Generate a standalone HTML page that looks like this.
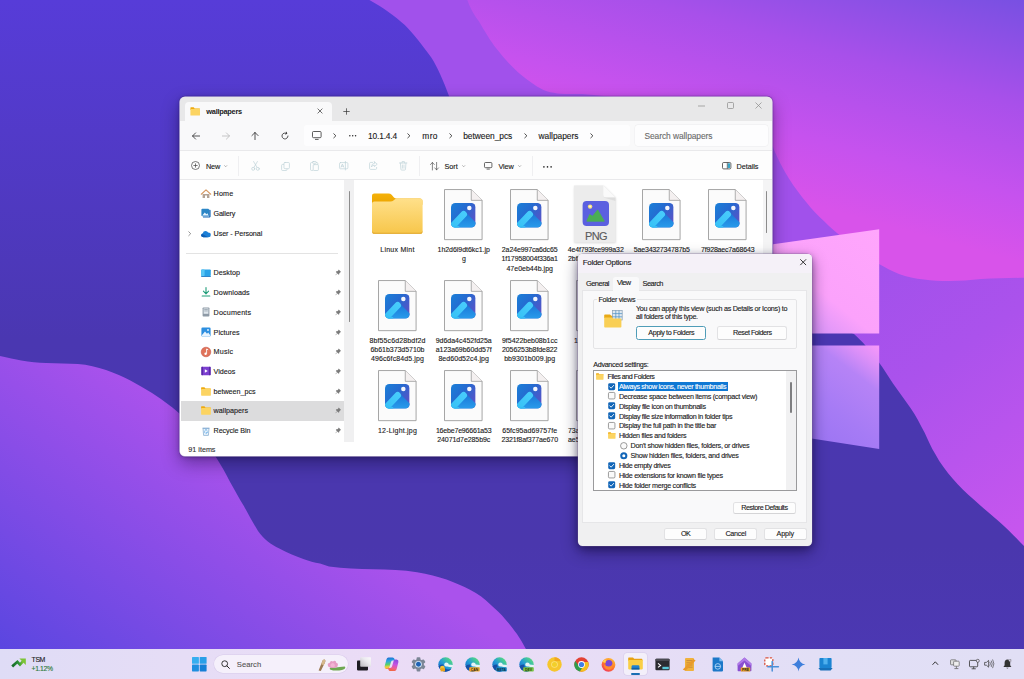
<!DOCTYPE html>
<html>
<head>
<meta charset="utf-8">
<title>Folder Options</title>
<style>
html,body{margin:0;padding:0;}
body{width:1024px;height:679px;overflow:hidden;position:relative;background:#4a37b2;font-family:"Liberation Sans",sans-serif;color:#1b1b1b;}
.abs{position:absolute;}
svg{display:block;overflow:visible;}
#wall{position:absolute;left:0;top:0;width:1024px;height:679px;}
.t{position:absolute;white-space:nowrap;line-height:1;-webkit-text-stroke:0.12px currentColor;}
#exp{position:absolute;left:180px;top:97px;width:592px;height:359px;background:#fff;border-radius:5px;overflow:hidden;}
#expsh{position:absolute;left:180px;top:97px;width:592px;height:359px;border-radius:5px;box-shadow:0 0 0 0.6px rgba(238,232,252,.95),0 0 0 1.2px rgba(40,20,90,.35),0 7px 18px rgba(10,0,40,.42),0 1px 5px rgba(10,0,40,.25);}
#dlg{position:absolute;background:#f0f0f1;border-radius:4.5px;overflow:hidden;}
#dlgsh{position:absolute;left:578px;top:254px;width:234px;height:291.6px;border-radius:5px;box-shadow:0 0 0 0.5px rgba(120,100,150,.55),0 6px 16px rgba(10,0,40,.45),0 2px 7px rgba(10,0,40,.36);}
#tb{position:absolute;left:0;width:1024px;background:linear-gradient(90deg,#dfdcf6 0%,#e6ddf6 18%,#ebdcf6 38%,#e7ddf6 60%,#e2dff6 80%,#e1dff5 100%);}
</style>
</head>
<body>
<svg id="wall" viewBox="0 0 1024 679">
<defs>
<linearGradient id="gBase" x1="0" y1="0" x2="0" y2="1">
<stop offset="0" stop-color="#573cd8"/><stop offset="0.5" stop-color="#4a37b1"/><stop offset="0.8" stop-color="#4a37ad"/><stop offset="1" stop-color="#4c38b4"/>
</linearGradient>
<linearGradient id="gMid" gradientUnits="userSpaceOnUse" x1="860" y1="270" x2="1030" y2="520">
<stop offset="0" stop-color="#a151eb"/><stop offset="0.4" stop-color="#ab52ec"/><stop offset="1" stop-color="#c656ee"/>
</linearGradient>
<linearGradient id="gPink" gradientUnits="userSpaceOnUse" x1="1024" y1="0" x2="956" y2="245">
<stop offset="0" stop-color="#7850e2"/><stop offset="0.4" stop-color="#a850ea"/><stop offset="0.75" stop-color="#c652ee"/><stop offset="1" stop-color="#d853ea"/>
</linearGradient>
<linearGradient id="gLeft" gradientUnits="userSpaceOnUse" x1="500" y1="640" x2="327" y2="883">
<stop offset="0" stop-color="#aa52ec"/><stop offset="1" stop-color="#5a46e0"/>
</linearGradient>
<linearGradient id="gW1" gradientUnits="userSpaceOnUse" x1="879" y1="229" x2="790" y2="340">
<stop offset="0" stop-color="#ffa6fc"/><stop offset="0.6" stop-color="#fba2fb"/><stop offset="0.85" stop-color="#d894f8"/><stop offset="1" stop-color="#b07cf2"/>
</linearGradient>
<linearGradient id="gW2" gradientUnits="userSpaceOnUse" x1="879" y1="346" x2="800" y2="450">
<stop offset="0" stop-color="#f898fa"/><stop offset="0.13" stop-color="#dc90f8"/><stop offset="0.28" stop-color="#b683f6"/><stop offset="0.6" stop-color="#a67bf5"/><stop offset="1" stop-color="#9872f2"/>
</linearGradient>
</defs>
<rect width="1024" height="679" fill="url(#gBase)"/>
<path d="M369.4,0 C382,7 395,16 404.8,25 C413,33 422,45 431.3,57.4 C437,66 444,82 449,96 C470,150 520,230 640,290 C740,330 820,316 854,334 C862,341 870,350 879,362.4 C884,369 888,376 893,383.6 C899,392 905,400 910.7,408.3 C916,416 920,424 924.8,433 C928,440 931,447 935.4,454.3 C940,463 946,471 953,479 C959,486 966,493 974.3,500 C982,507 990,514 999,521.4 C1008,529 1016,538 1024,546 L1024,0 Z" fill="url(#gMid)"/>
<path d="M467.3,0 C470,8 474,15 479,21.5 C484,30 491,42 496.6,48.8 C503,57 510,65 518,72.3 C526,79 535,86 543.5,90 C556,95 570,94 582,94 C650,100 740,108 773,147 C778,160 783,168 785,172 C790,181 796,189 802,197 C808,204 813,211 819.6,217 C826,223 831,228 837,233 C850,244 864,256 879,264 C886,268 892,271 899,274 C907,277 915,278.5 924,279.5 C932,280.5 940,281 949,281 C960,281 970,280 981,279 C995,278.5 1010,278 1024,277.7 L1024,0 Z" fill="url(#gPink)"/>
<path d="M0,356 C8,357.6 15,359.3 21.2,360.5 C30,362 38,362.6 46,363 C57,363.6 68,363.4 77.8,364 C88,364.8 97,367 106,370 C115,373.2 123,376.6 130.8,380.7 C138,384.5 145,388.6 152,393 C158,397 164,401 169.7,405.4 C174,408.6 177,411 180,414 C196,428 207,442 215.7,456.7 C221,465 225.6,473 229.8,481.4 C234.6,490 239,498 244,506.2 C248.6,514.6 253,523 258,531 C264,539.6 271,544.6 279.3,548.6 C287,552.6 295,556.2 304,559.2 C309,561 314,562.4 320,563.5 C323,564.6 326,565.6 329,566.4 C344,568.4 358,569 373,569.3 C388,569.8 403,570 417,572.2 C428,574 438,576.5 446.5,579.6 C455,583 463,586 470,589.8 C478,594 485,599 490.4,604.5 C496,609.5 501,614 505,619 C509.5,624 513,628.5 516.8,633.8 C520,638.5 523,643.5 525.6,648.4 L527,651 L0,651 Z" fill="url(#gLeft)"/>
<polygon points="773,244.2 879.2,229.3 879.2,333.5 773,333.5" fill="url(#gW1)"/>
<polygon points="773,345.4 879.2,345.4 879.2,449 773,432.6" fill="url(#gW2)"/>
</svg>

<svg width="0" height="0" style="position:absolute"><defs>
<linearGradient id="phBg" x1="0" y1="0" x2="1" y2="0.7"><stop offset="0" stop-color="#1a80d8"/><stop offset="0.5" stop-color="#2669d0"/><stop offset="1" stop-color="#5a52c6"/></linearGradient>
<linearGradient id="phM1" x1="0" y1="1" x2="1" y2="0"><stop offset="0" stop-color="#38c2f6"/><stop offset="1" stop-color="#46cbfb"/></linearGradient>
<linearGradient id="phM2" x1="0" y1="0" x2="0" y2="1"><stop offset="0" stop-color="#1872d6"/><stop offset="1" stop-color="#2a9eec"/></linearGradient>
<clipPath id="phClip"><rect x="0" y="0" width="24" height="24" rx="4.2"/></clipPath>
<linearGradient id="fBody" x1="0" y1="0" x2="0" y2="1"><stop offset="0" stop-color="#ffe08a"/><stop offset="1" stop-color="#f7c64a"/></linearGradient>
<linearGradient id="fBack" x1="0" y1="0" x2="0" y2="1"><stop offset="0" stop-color="#f5b20a"/><stop offset="1" stop-color="#eaa300"/></linearGradient>
<linearGradient id="edgeG" x1="0.1" y1="0.9" x2="0.9" y2="0.1"><stop offset="0" stop-color="#1467c6"/><stop offset="0.45" stop-color="#249bd6"/><stop offset="0.8" stop-color="#44c89a"/><stop offset="1" stop-color="#5ed97e"/></linearGradient>
<linearGradient id="edgeG2" x1="0" y1="0" x2="1" y2="0"><stop offset="0" stop-color="#66eb6e"/><stop offset="1" stop-color="#2bc3d2"/></linearGradient>
<linearGradient id="copG" x1="0" y1="0" x2="1" y2="1"><stop offset="0" stop-color="#2a8cf0"/><stop offset="0.35" stop-color="#7a5cf0"/><stop offset="0.65" stop-color="#f0509a"/><stop offset="1" stop-color="#f7b23a"/></linearGradient>
<linearGradient id="winG" x1="0" y1="0" x2="1" y2="1"><stop offset="0" stop-color="#4cc2f5"/><stop offset="1" stop-color="#0f7fd6"/></linearGradient>
</defs></svg>

<div id="expsh"></div>
<div id="exp">
<div class="abs" style="left:0px;top:0px;width:592px;height:24.3px;background:#e8e8e9;"></div>
<div class="abs" style="left:4.5px;top:4.5px;width:147.8px;height:19.8px;background:#f9f9fa;border-radius:4px 4px 0 0;"></div>
<div class="abs" style="left:0px;top:24.3px;width:592px;height:29.4px;background:#f9f9fa;"></div>
<div class="abs" style="left:0px;top:53.4px;width:592px;height:0.8px;background:#e9e9eb;"></div>
<div class="abs" style="left:0px;top:54.4px;width:592px;height:28px;background:#fdfdfd;"></div>
<div class="abs" style="left:0px;top:82.4px;width:592px;height:0.8px;background:#e9e9eb;"></div>
<svg class="abs" style="left:10px;top:9.6px;" width="10.4" height="8.8" viewBox="0 0 10 9"><path d="M0.6,0.3 H3.4 L4.6,1.5 H9.3 Q9.9,1.5 9.9,2.1 V3 H0.1 V0.8 Q0.1,0.3 0.6,0.3 Z" fill="#eeaa10"/><path d="M0.1,2.6 Q0.1,2.1 0.6,2.1 H3.8 L4.8,1.5 H9.4 Q9.9,1.5 9.9,2.1 V8.1 Q9.9,8.7 9.4,8.7 H0.6 Q0.1,8.7 0.1,8.1 Z" fill="#fcd462"/></svg>
<span class="t" style="left:26.3px;top:11.02px;font-size:7.4px;color:#1a1a1a;font-weight:700;letter-spacing:-0.26px;-webkit-text-stroke:0;">wallpapers</span>
<svg class="abs" style="left:136.6px;top:10.7px;" width="6" height="6" viewBox="0 0 6 6"><path d="M0.6,0.6 L5.4,5.4 M5.4,0.6 L0.6,5.4" stroke="#333" stroke-width="0.7" fill="none"/></svg>
<svg class="abs" style="left:163px;top:10.8px;" width="7" height="7" viewBox="0 0 7 7"><path d="M3.5,0.3 V6.7 M0.3,3.5 H6.7" stroke="#333" stroke-width="0.7" fill="none"/></svg>
<svg class="abs" style="left:518px;top:8px;" width="7" height="2" viewBox="0 0 7 2"><path d="M0,1 H7" stroke="#8a8a8a" stroke-width="0.7"/></svg>
<svg class="abs" style="left:546.5px;top:5px;" width="7" height="7" viewBox="0 0 7 7"><rect x="0.5" y="0.5" width="6" height="6" rx="1" fill="none" stroke="#8a8a8a" stroke-width="0.7"/></svg>
<svg class="abs" style="left:574.5px;top:5px;" width="7" height="7" viewBox="0 0 7 7"><path d="M0.5,0.5 L6.5,6.5 M6.5,0.5 L0.5,6.5" stroke="#8a8a8a" stroke-width="0.7" fill="none"/></svg>
<svg class="abs" style="left:12.3px;top:34.6px;" width="8" height="8" viewBox="0 0 8 8"><path d="M7.6,4 H0.6 M3.6,0.9 L0.5,4 L3.6,7.1" stroke="#2a2a2a" stroke-width="0.8" fill="none" stroke-linecap="round" stroke-linejoin="round"/></svg>
<svg class="abs" style="left:42.3px;top:34.6px;" width="8" height="8" viewBox="0 0 8 8"><path d="M0.4,4 H7.4 M4.4,0.9 L7.5,4 L4.4,7.1" stroke="#b9b9b9" stroke-width="0.8" fill="none" stroke-linecap="round" stroke-linejoin="round"/></svg>
<svg class="abs" style="left:71.2px;top:34.6px;" width="8" height="8" viewBox="0 0 8 8"><path d="M4,7.6 V0.6 M0.9,3.6 L4,0.5 L7.1,3.6" stroke="#2a2a2a" stroke-width="0.8" fill="none" stroke-linecap="round" stroke-linejoin="round"/></svg>
<svg class="abs" style="left:101px;top:34.6px;" width="8" height="8" viewBox="0 0 8 8"><path d="M7,4 A3,3 0 1 1 5.6,1.4 M5.4,0.2 L5.8,1.6 L4.4,2" stroke="#2a2a2a" stroke-width="0.8" fill="none" stroke-linecap="round" stroke-linejoin="round"/></svg>
<div class="abs" style="left:124px;top:28.3px;width:326.3px;height:21px;background:#fdfdfe;border-radius:3px;"></div>
<div class="abs" style="left:455.3px;top:28.3px;width:132.7px;height:21px;background:#fdfdfe;border-radius:3px;box-shadow:0 0 0 0.4px #ececee;"></div>
<svg class="abs" style="left:131.8px;top:34.2px;" width="9.6" height="9" viewBox="0 0 9.6 9"><rect x="0.5" y="0.5" width="8.6" height="6.2" rx="1" fill="none" stroke="#333" stroke-width="0.8"/><path d="M3,8.4 H6.6" stroke="#333" stroke-width="0.8"/></svg>
<svg class="abs" style="left:153.4px;top:36.2px;" width="3.4" height="5.6" viewBox="0 0 3.4 5.6"><path d="M0.5,0.5 L2.9,2.8 L0.5,5.1" stroke="#3a3a3a" stroke-width="0.9" fill="none"/></svg>
<svg class="abs" style="left:169.3px;top:37.9px;" width="7.4" height="1.6" viewBox="0 0 7.4 1.6"><circle cx="0.8" cy="0.8" r="0.75" fill="#2a2a2a"/><circle cx="3.7" cy="0.8" r="0.75" fill="#2a2a2a"/><circle cx="6.6" cy="0.8" r="0.75" fill="#2a2a2a"/></svg>
<span class="t" style="left:188px;top:35.15px;font-size:8.4px;color:#1a1a1a;letter-spacing:-0.16px;">10.1.4.4</span>
<svg class="abs" style="left:227px;top:36.2px;" width="3.4" height="5.6" viewBox="0 0 3.4 5.6"><path d="M0.5,0.5 L2.9,2.8 L0.5,5.1" stroke="#3a3a3a" stroke-width="0.9" fill="none"/></svg>
<span class="t" style="left:242.3px;top:35.15px;font-size:8.4px;color:#1a1a1a;letter-spacing:0.39px;">mro</span>
<svg class="abs" style="left:269px;top:36.2px;" width="3.4" height="5.6" viewBox="0 0 3.4 5.6"><path d="M0.5,0.5 L2.9,2.8 L0.5,5.1" stroke="#3a3a3a" stroke-width="0.9" fill="none"/></svg>
<span class="t" style="left:283.2px;top:35.15px;font-size:8.4px;color:#1a1a1a;letter-spacing:-0.03px;">between_pcs</span>
<svg class="abs" style="left:344.2px;top:36.2px;" width="3.4" height="5.6" viewBox="0 0 3.4 5.6"><path d="M0.5,0.5 L2.9,2.8 L0.5,5.1" stroke="#3a3a3a" stroke-width="0.9" fill="none"/></svg>
<span class="t" style="left:358.6px;top:35.15px;font-size:8.4px;color:#1a1a1a;letter-spacing:-0.03px;">wallpapers</span>
<svg class="abs" style="left:410.1px;top:36.2px;" width="3.4" height="5.6" viewBox="0 0 3.4 5.6"><path d="M0.5,0.5 L2.9,2.8 L0.5,5.1" stroke="#3a3a3a" stroke-width="0.9" fill="none"/></svg>
<span class="t" style="left:464.4px;top:35.15px;font-size:8.4px;color:#6b6b6b;letter-spacing:-0.05px;">Search wallpapers</span>
<svg class="abs" style="left:10.6px;top:64.3px;" width="9" height="9" viewBox="0 0 9 9"><circle cx="4.5" cy="4.5" r="4" fill="none" stroke="#444" stroke-width="0.7"/><path d="M4.5,2.4 V6.6 M2.4,4.5 H6.6" stroke="#444" stroke-width="0.7"/></svg>
<span class="t" style="left:25.9px;top:65.87px;font-size:7.3px;color:#1a1a1a;letter-spacing:-0.07px;">New</span>
<svg class="abs" style="left:44.2px;top:68.4px;" width="3.4" height="2.2" viewBox="0 0 3.4 2.2"><path d="M0.3,0.3 L1.7,1.8 L3.1,0.3" stroke="#7a7a7a" stroke-width="0.55" fill="none"/></svg>
<div class="abs" style="left:58.3px;top:59px;width:0.6px;height:19.5px;background:#efeff1;"></div>
<svg class="abs" style="left:70.5px;top:64px;" width="9" height="10" viewBox="0 0 9 10"><path d="M2.6,0.5 L6,6.4 M6.4,0.5 L3,6.4" fill="none" stroke="#bfd3d9" stroke-width="0.7" stroke-linejoin="round" stroke-linecap="round"/><circle cx="2.2" cy="7.8" r="1.5" fill="none" stroke="#bfd3d9" stroke-width="0.7" stroke-linejoin="round" stroke-linecap="round"/><circle cx="6.8" cy="7.8" r="1.5" fill="none" stroke="#bfd3d9" stroke-width="0.7" stroke-linejoin="round" stroke-linecap="round"/></svg>
<svg class="abs" style="left:100.5px;top:64.5px;" width="9" height="9" viewBox="0 0 9 9"><rect x="3" y="0.5" width="5.4" height="6.2" rx="1" fill="none" stroke="#bfd3d9" stroke-width="0.7" stroke-linejoin="round" stroke-linecap="round"/><path d="M2.6,2.4 H1.6 Q0.6,2.4 0.6,3.4 V7.6 Q0.6,8.5 1.6,8.5 H5 Q6,8.5 6,7.6 V7.2" fill="none" stroke="#bfd3d9" stroke-width="0.7" stroke-linejoin="round" stroke-linecap="round"/></svg>
<svg class="abs" style="left:130px;top:64px;" width="9" height="10" viewBox="0 0 9 10"><path d="M2.4,1.6 H1.4 Q0.5,1.6 0.5,2.5 V8.5 Q0.5,9.4 1.4,9.4 H2.6" fill="none" stroke="#bfd3d9" stroke-width="0.7" stroke-linejoin="round" stroke-linecap="round"/><rect x="2.6" y="0.5" width="3.6" height="1.8" rx="0.6" fill="none" stroke="#bfd3d9" stroke-width="0.7" stroke-linejoin="round" stroke-linecap="round"/><rect x="3.2" y="3.6" width="5.2" height="5.9" rx="0.9" fill="none" stroke="#bfd3d9" stroke-width="0.7" stroke-linejoin="round" stroke-linecap="round"/><path d="M6.4,1.6 H7 Q7.8,1.6 7.8,2.4 V3.4" fill="none" stroke="#bfd3d9" stroke-width="0.7" stroke-linejoin="round" stroke-linecap="round"/></svg>
<svg class="abs" style="left:159px;top:64.3px;" width="9.4" height="9.4" viewBox="0 0 9.4 9.4"><rect x="0.5" y="1.6" width="8.4" height="6.2" rx="1" fill="none" stroke="#bfd3d9" stroke-width="0.7" stroke-linejoin="round" stroke-linecap="round"/><path d="M6.4,0.4 V9" fill="none" stroke="#bfd3d9" stroke-width="0.7" stroke-linejoin="round" stroke-linecap="round"/><path d="M2,6.2 L3.4,3 L4.8,6.2 M2.5,5.2 H4.3" fill="none" stroke="#bfd3d9" stroke-width="0.7" stroke-linejoin="round" stroke-linecap="round"/></svg>
<svg class="abs" style="left:188.6px;top:64.3px;" width="9" height="9" viewBox="0 0 9 9"><path d="M3.6,1.4 H1.6 Q0.6,1.4 0.6,2.4 V7.4 Q0.6,8.4 1.6,8.4 H6.6 Q7.6,8.4 7.6,7.4 V6.4" fill="none" stroke="#bfd3d9" stroke-width="0.7" stroke-linejoin="round" stroke-linecap="round"/><path d="M5.4,0.8 L8.2,3.2 L5.4,5.6 V4.2 Q3.2,4.2 2.4,6 Q2.6,2.4 5.4,2.2 Z" fill="none" stroke="#bfd3d9" stroke-width="0.7" stroke-linejoin="round" stroke-linecap="round"/></svg>
<svg class="abs" style="left:218.6px;top:64px;" width="8.4" height="9.6" viewBox="0 0 8.4 9.6"><path d="M0.5,2 H7.9 M3,2 V0.6 H5.4 V2 M1.4,2 L1.9,8.4 Q2,9.1 2.7,9.1 H5.7 Q6.4,9.1 6.5,8.4 L7,2 M3.4,4 V7.2 M5,4 V7.2" fill="none" stroke="#bfd3d9" stroke-width="0.7" stroke-linejoin="round" stroke-linecap="round"/></svg>
<div class="abs" style="left:239.3px;top:59px;width:0.6px;height:19.5px;background:#efeff1;"></div>
<svg class="abs" style="left:250px;top:64.6px;" width="9" height="8.4" viewBox="0 0 9 8.4"><path d="M2.4,8 V0.6 M0.5,2.5 L2.4,0.5 L4.3,2.5 M6.6,0.4 V7.8 M4.7,5.9 L6.6,7.9 L8.5,5.9" fill="none" stroke="#444" stroke-width="0.65" stroke-linecap="round" stroke-linejoin="round"/></svg>
<span class="t" style="left:264.5px;top:65.87px;font-size:7.3px;color:#1a1a1a;letter-spacing:-0.05px;">Sort</span>
<svg class="abs" style="left:281.9px;top:68.4px;" width="3.4" height="2.2" viewBox="0 0 3.4 2.2"><path d="M0.3,0.3 L1.7,1.8 L3.1,0.3" stroke="#7a7a7a" stroke-width="0.55" fill="none"/></svg>
<svg class="abs" style="left:304.2px;top:65.2px;" width="8.4" height="7.6" viewBox="0 0 8.4 7.6"><rect x="0.5" y="0.5" width="7.4" height="5.2" rx="1" fill="none" stroke="#333" stroke-width="0.75"/><path d="M2.6,7.1 H5.8" stroke="#333" stroke-width="0.75"/></svg>
<span class="t" style="left:318.4px;top:65.87px;font-size:7.3px;color:#1a1a1a;letter-spacing:-0.1px;">View</span>
<svg class="abs" style="left:338.1px;top:68.4px;" width="3.4" height="2.2" viewBox="0 0 3.4 2.2"><path d="M0.3,0.3 L1.7,1.8 L3.1,0.3" stroke="#7a7a7a" stroke-width="0.55" fill="none"/></svg>
<div class="abs" style="left:351.7px;top:59px;width:0.6px;height:19.5px;background:#efeff1;"></div>
<svg class="abs" style="left:363px;top:68.8px;" width="9" height="1.8" viewBox="0 0 9 1.8"><circle cx="0.9" cy="0.9" r="0.8" fill="#222"/><circle cx="4.5" cy="0.9" r="0.8" fill="#222"/><circle cx="8.1" cy="0.9" r="0.8" fill="#222"/></svg>
<svg class="abs" style="left:542px;top:65.3px;" width="9.4" height="7.4" viewBox="0 0 9.4 7.4"><rect x="0.5" y="0.5" width="8.4" height="6.4" rx="1.2" fill="#fff" stroke="#333" stroke-width="0.75"/><rect x="5.6" y="1.3" width="2.5" height="4.8" rx="0.6" fill="#3aa6c9"/><path d="M5.3,0.6 V6.8" stroke="#333" stroke-width="0.6"/></svg>
<span class="t" style="left:556.6px;top:65.97px;font-size:7.3px;color:#1a1a1a;letter-spacing:-0.09px;">Details</span>
<div class="abs" style="left:0px;top:83.2px;width:164px;height:261.8px;background:#fff;"></div>
<div class="abs" style="left:164px;top:83.2px;width:10.3px;height:261.8px;background:#f0f0f1;"></div>
<div class="abs" style="left:169.1px;top:93.5px;width:1.2px;height:131.5px;background:#8c8c8c;border-radius:1px;"></div>
<div class="abs" style="left:1px;top:304.2px;width:163px;height:19.4px;background:#dcdcdd;"></div>
<div class="abs" style="left:6px;top:155.7px;width:152px;height:0.7px;background:#e3e3e3;"></div>
<svg class="abs" style="left:20.5px;top:91.8px;" width="10" height="10" viewBox="0 0 10 10"><path d="M1.6,5 V9 H4 V6.4 H6 V9 H8.4 V5 Z" fill="#b3a396"/><path d="M0.3,5.2 L5,0.9 L9.7,5.2" fill="none" stroke="#d79b66" stroke-width="1.2" stroke-linejoin="round" stroke-linecap="round"/></svg>
<span class="t" style="left:33.6px;top:93.42px;font-size:7.2px;color:#1a1a1a;letter-spacing:0.15px;">Home</span>
<svg class="abs" style="left:20.5px;top:111.3px;" width="10" height="10" viewBox="0 0 10 10"><rect x="0.4" y="0.8" width="7.6" height="7.4" rx="1" fill="#2b86c6"/><path d="M1.2,7.4 L3.8,4.4 L5.4,6.2 L6.4,5.2 L7.6,7.4 Z" fill="#e8f4ff"/><path d="M8.2,1.8 H9 Q9.6,1.8 9.6,2.4 V8.6 Q9.6,9.4 8.8,9.4 H2 V8.6 H8.2 Z" fill="#1567b8"/></svg>
<span class="t" style="left:33.6px;top:112.92px;font-size:7.2px;color:#1a1a1a;letter-spacing:-0.18px;">Gallery</span>
<svg class="abs" style="left:20.5px;top:131.5px;" width="10" height="10" viewBox="0 0 10 10"><path d="M2.4,8.2 Q0.2,8.2 0.2,6.2 Q0.2,4.6 1.8,4.3 Q2.2,2 4.6,2 Q6.4,2 7.1,3.6 Q9.8,3.6 9.8,6 Q9.8,8.2 7.6,8.2 Z" fill="#1b7fd6"/><path d="M2.4,8.2 Q0.2,8.2 0.2,6.2 Q0.2,5.2 1,4.7 L7,8.2 Z" fill="#0f5fb4"/></svg>
<span class="t" style="left:33.6px;top:133.12px;font-size:7.2px;color:#1a1a1a;letter-spacing:-0.09px;">User - Personal</span>
<svg class="abs" style="left:20.5px;top:170.7px;" width="10" height="10" viewBox="0 0 10 10"><rect x="0.2" y="1.4" width="9.6" height="6.6" rx="0.8" fill="#2aa3e8"/><rect x="0.2" y="1.4" width="3.4" height="6.6" rx="0.8" fill="#57c6f5"/><rect x="0.2" y="8" width="9.6" height="0.9" fill="#1b78c4"/></svg>
<span class="t" style="left:33.6px;top:172.32px;font-size:7.2px;color:#1a1a1a;letter-spacing:-0.01px;">Desktop</span>
<svg class="abs" style="left:155.2px;top:172.3px;" width="6.6" height="6.6" viewBox="0 0 10 10"><path d="M5.6,0.8 L9.2,4.4 L8.2,4.8 L6.6,6.4 L6.4,8 L5.6,8.8 L3.6,6.8 L1,9.4 L0.6,9 L3.2,6.4 L1.2,4.4 L2,3.6 L3.6,3.4 L5.2,1.8 Z" fill="#7a7a7a"/></svg>
<svg class="abs" style="left:20.5px;top:190.3px;" width="10" height="10" viewBox="0 0 10 10"><path d="M5,0.6 V6.6 M2.4,4.2 L5,6.8 L7.6,4.2" fill="none" stroke="#1f9d78" stroke-width="1.1" stroke-linecap="round" stroke-linejoin="round"/><path d="M1.2,9 H8.8" stroke="#1f9d78" stroke-width="1.1" stroke-linecap="round"/></svg>
<span class="t" style="left:33.6px;top:191.92px;font-size:7.2px;color:#1a1a1a;letter-spacing:0.07px;">Downloads</span>
<svg class="abs" style="left:155.2px;top:191.9px;" width="6.6" height="6.6" viewBox="0 0 10 10"><path d="M5.6,0.8 L9.2,4.4 L8.2,4.8 L6.6,6.4 L6.4,8 L5.6,8.8 L3.6,6.8 L1,9.4 L0.6,9 L3.2,6.4 L1.2,4.4 L2,3.6 L3.6,3.4 L5.2,1.8 Z" fill="#7a7a7a"/></svg>
<svg class="abs" style="left:20.5px;top:210.1px;" width="10" height="10" viewBox="0 0 10 10"><rect x="1.6" y="0.4" width="6.8" height="9.2" rx="0.8" fill="#8e9aa6"/><rect x="2.6" y="1.4" width="4.8" height="5.4" fill="#dfe6ec"/><rect x="3.2" y="2.2" width="3.6" height="0.7" fill="#8e9aa6"/><rect x="3.2" y="3.6" width="3.6" height="0.7" fill="#8e9aa6"/></svg>
<span class="t" style="left:33.6px;top:211.72px;font-size:7.2px;color:#1a1a1a;letter-spacing:0.14px;">Documents</span>
<svg class="abs" style="left:155.2px;top:211.7px;" width="6.6" height="6.6" viewBox="0 0 10 10"><path d="M5.6,0.8 L9.2,4.4 L8.2,4.8 L6.6,6.4 L6.4,8 L5.6,8.8 L3.6,6.8 L1,9.4 L0.6,9 L3.2,6.4 L1.2,4.4 L2,3.6 L3.6,3.4 L5.2,1.8 Z" fill="#7a7a7a"/></svg>
<svg class="abs" style="left:20.5px;top:230px;" width="10" height="10" viewBox="0 0 10 10"><rect x="0.4" y="0.6" width="9.2" height="8.8" rx="1.2" fill="#2d8fe0"/><path d="M0.6,8.6 L4,4.6 L6,6.8 L7.2,5.6 L9.4,8.6 Q9.2,9.4 8.4,9.4 H1.6 Q0.8,9.4 0.6,8.6 Z" fill="#e8f4ff"/><circle cx="7" cy="3" r="0.9" fill="#e8f4ff"/></svg>
<span class="t" style="left:33.6px;top:231.62px;font-size:7.2px;color:#1a1a1a;letter-spacing:0px;">Pictures</span>
<svg class="abs" style="left:155.2px;top:231.6px;" width="6.6" height="6.6" viewBox="0 0 10 10"><path d="M5.6,0.8 L9.2,4.4 L8.2,4.8 L6.6,6.4 L6.4,8 L5.6,8.8 L3.6,6.8 L1,9.4 L0.6,9 L3.2,6.4 L1.2,4.4 L2,3.6 L3.6,3.4 L5.2,1.8 Z" fill="#7a7a7a"/></svg>
<svg class="abs" style="left:20.5px;top:249.5px;" width="10" height="10" viewBox="0 0 10 10"><circle cx="5" cy="5" r="4.8" fill="#e0735a"/><circle cx="5" cy="5" r="4.8" fill="none" stroke="#c7574a" stroke-width="0.6"/><path d="M5.6,2 V6.6" stroke="#fff" stroke-width="0.9"/><circle cx="4.6" cy="6.8" r="1.2" fill="#fff"/><path d="M5.6,2 L7.2,2.8" stroke="#fff" stroke-width="0.9"/></svg>
<span class="t" style="left:33.6px;top:251.12px;font-size:7.2px;color:#1a1a1a;letter-spacing:0.16px;">Music</span>
<svg class="abs" style="left:155.2px;top:251.1px;" width="6.6" height="6.6" viewBox="0 0 10 10"><path d="M5.6,0.8 L9.2,4.4 L8.2,4.8 L6.6,6.4 L6.4,8 L5.6,8.8 L3.6,6.8 L1,9.4 L0.6,9 L3.2,6.4 L1.2,4.4 L2,3.6 L3.6,3.4 L5.2,1.8 Z" fill="#7a7a7a"/></svg>
<svg class="abs" style="left:20.5px;top:269.1px;" width="10" height="10" viewBox="0 0 10 10"><rect x="0.4" y="0.8" width="9.2" height="8.4" rx="1" fill="#7b3fd0"/><rect x="0.4" y="0.8" width="1.6" height="8.4" fill="#5a2aa8"/><rect x="8" y="0.8" width="1.6" height="8.4" fill="#5a2aa8"/><path d="M3.8,3.2 L6.8,5 L3.8,6.8 Z" fill="#fff"/></svg>
<span class="t" style="left:33.6px;top:270.72px;font-size:7.2px;color:#1a1a1a;letter-spacing:-0.03px;">Videos</span>
<svg class="abs" style="left:155.2px;top:270.7px;" width="6.6" height="6.6" viewBox="0 0 10 10"><path d="M5.6,0.8 L9.2,4.4 L8.2,4.8 L6.6,6.4 L6.4,8 L5.6,8.8 L3.6,6.8 L1,9.4 L0.6,9 L3.2,6.4 L1.2,4.4 L2,3.6 L3.6,3.4 L5.2,1.8 Z" fill="#7a7a7a"/></svg>
<svg class="abs" style="left:20.5px;top:289.5px;" width="10" height="9" viewBox="0 0 10 9"><path d="M0.6,0.3 H3.4 L4.6,1.5 H9.3 Q9.9,1.5 9.9,2.1 V3 H0.1 V0.8 Q0.1,0.3 0.6,0.3 Z" fill="#eeaa10"/><path d="M0.1,2.6 Q0.1,2.1 0.6,2.1 H3.8 L4.8,1.5 H9.4 Q9.9,1.5 9.9,2.1 V8.1 Q9.9,8.7 9.4,8.7 H0.6 Q0.1,8.7 0.1,8.1 Z" fill="#fcd462"/></svg>
<span class="t" style="left:33.6px;top:290.72px;font-size:7.2px;color:#1a1a1a;letter-spacing:-0.04px;">between_pcs</span>
<svg class="abs" style="left:155.2px;top:290.7px;" width="6.6" height="6.6" viewBox="0 0 10 10"><path d="M5.6,0.8 L9.2,4.4 L8.2,4.8 L6.6,6.4 L6.4,8 L5.6,8.8 L3.6,6.8 L1,9.4 L0.6,9 L3.2,6.4 L1.2,4.4 L2,3.6 L3.6,3.4 L5.2,1.8 Z" fill="#7a7a7a"/></svg>
<svg class="abs" style="left:20.5px;top:309.1px;" width="10" height="9" viewBox="0 0 10 9"><path d="M0.6,0.3 H3.4 L4.6,1.5 H9.3 Q9.9,1.5 9.9,2.1 V3 H0.1 V0.8 Q0.1,0.3 0.6,0.3 Z" fill="#eeaa10"/><path d="M0.1,2.6 Q0.1,2.1 0.6,2.1 H3.8 L4.8,1.5 H9.4 Q9.9,1.5 9.9,2.1 V8.1 Q9.9,8.7 9.4,8.7 H0.6 Q0.1,8.7 0.1,8.1 Z" fill="#fcd462"/></svg>
<span class="t" style="left:33.6px;top:310.32px;font-size:7.2px;color:#1a1a1a;letter-spacing:0.02px;">wallpapers</span>
<svg class="abs" style="left:155.2px;top:310.3px;" width="6.6" height="6.6" viewBox="0 0 10 10"><path d="M5.6,0.8 L9.2,4.4 L8.2,4.8 L6.6,6.4 L6.4,8 L5.6,8.8 L3.6,6.8 L1,9.4 L0.6,9 L3.2,6.4 L1.2,4.4 L2,3.6 L3.6,3.4 L5.2,1.8 Z" fill="#7a7a7a"/></svg>
<svg class="abs" style="left:20.5px;top:328.7px;" width="10" height="10" viewBox="0 0 10 10"><path d="M2,2.4 H8 L7.4,9.4 H2.6 Z" fill="#eaf3fb" stroke="#7ea8cf" stroke-width="0.7"/><path d="M1.4,2.2 H8.6" stroke="#7ea8cf" stroke-width="0.8"/><path d="M3.8,4.4 L5,3.6 L6.2,4.4 M6.4,5.6 L6,7 L4.6,7.2 M3.6,5.4 L3.6,6.6" fill="none" stroke="#2d8fe0" stroke-width="0.7"/></svg>
<span class="t" style="left:33.6px;top:330.32px;font-size:7.2px;color:#1a1a1a;letter-spacing:-0.11px;">Recycle Bin</span>
<svg class="abs" style="left:155.2px;top:330.3px;" width="6.6" height="6.6" viewBox="0 0 10 10"><path d="M5.6,0.8 L9.2,4.4 L8.2,4.8 L6.6,6.4 L6.4,8 L5.6,8.8 L3.6,6.8 L1,9.4 L0.6,9 L3.2,6.4 L1.2,4.4 L2,3.6 L3.6,3.4 L5.2,1.8 Z" fill="#7a7a7a"/></svg>
<svg class="abs" style="left:8.2px;top:133.9px;" width="3.2" height="5.4" viewBox="0 0 3.2 5.4"><path d="M0.5,0.5 L2.7,2.7 L0.5,4.9" stroke="#666" stroke-width="0.7" fill="none"/></svg>
<div class="abs" style="left:0px;top:345px;width:592px;height:14px;background:#fff;"></div>
<span class="t" style="left:8.3px;top:348.82px;font-size:7.2px;color:#333;letter-spacing:0px;">91 items</span>
<div class="abs" style="left:174.3px;top:83.2px;width:417.7px;height:261.8px;overflow:hidden;background:#fff;">
<div class="abs" style="left:408.5px;top:0px;width:9.2px;height:261.8px;background:#f4f4f5;"></div>
<div class="abs" style="left:412px;top:10.5px;width:1.2px;height:41.9px;background:#8c8c8c;border-radius:1px;"></div>
<svg class="abs" style="left:16.9px;top:12.6px;" width="52.6" height="41.2" viewBox="0 0 52 42"><path d="M2.5,0.4 H17 Q19,0.4 20.2,1.8 L22.6,4.6 Q23.6,5.6 25.2,5.6 H49 Q51.6,5.6 51.6,8.2 V12 H0.2 V2.8 Q0.2,0.4 2.5,0.4 Z" fill="url(#fBack)"/><path d="M0.2,11 Q0.2,8.6 2.6,8.6 H19 Q21,8.6 22.4,7.4 L23.6,6.4 Q24.6,5.6 26,5.6 H49.2 Q51.8,5.6 51.8,8.2 V39 Q51.8,41.6 49.2,41.6 H2.8 Q0.2,41.6 0.2,39 Z" fill="url(#fBody)"/><path d="M0.2,38.2 V39 Q0.2,41.6 2.8,41.6 H49.2 Q51.8,41.6 51.8,39 V38.2 Q51.8,40.6 49.2,40.6 H2.8 Q0.2,40.6 0.2,38.2 Z" fill="#e0a72e"/></svg>
<span class="t" style="left:43.2px;transform:translateX(-50%);top:65.81px;font-size:7px;color:#1a1a1a;letter-spacing:0.26px;">Linux Mint</span>
<svg class="abs" style="left:89.9px;top:9.1px;" width="38.6" height="51.2" viewBox="0 0 38.5 51"><path d="M0.5,0.5 H27.2 L38.0,11.3 V50.5 H0.5 Z" fill="#fbfbfb" stroke="#9c9c9c" stroke-width="0.9"/><path d="M27.2,0.5 V11.3 H38.0" fill="#f4f0f0" stroke="#9c9c9c" stroke-width="0.8"/></svg>
<svg class="abs" style="left:96.9px;top:23px;" width="24.6" height="24.6" viewBox="0 0 24 24"><g clip-path="url(#phClip)"><rect x="0" y="0" width="24" height="24" fill="url(#phBg)"/><path d="M-1,21 L11,9 Q12.6,7.5 14.2,9 L25,19.8 V25 H-1 Z" fill="url(#phM2)"/><path d="M2.2,21.8 L12.4,11" stroke="url(#phM1)" stroke-width="6.4" stroke-linecap="round" fill="none"/><rect x="-1" y="22.4" width="9" height="3" fill="#34bdf4"/></g><circle cx="17.9" cy="4.9" r="2.2" fill="#f4f6fc"/></svg>
<span class="t" style="left:109.4px;transform:translateX(-50%);top:65.81px;font-size:7px;color:#1a1a1a;letter-spacing:-0.04px;">1h2d6i9dt6kc1.jp</span>
<span class="t" style="left:109.4px;transform:translateX(-50%);top:75.11px;font-size:7px;color:#1a1a1a;letter-spacing:-0.31px;">g</span>
<svg class="abs" style="left:155.9px;top:9.1px;" width="38.6" height="51.2" viewBox="0 0 38.5 51"><path d="M0.5,0.5 H27.2 L38.0,11.3 V50.5 H0.5 Z" fill="#fbfbfb" stroke="#9c9c9c" stroke-width="0.9"/><path d="M27.2,0.5 V11.3 H38.0" fill="#f4f0f0" stroke="#9c9c9c" stroke-width="0.8"/></svg>
<svg class="abs" style="left:162.9px;top:23px;" width="24.6" height="24.6" viewBox="0 0 24 24"><g clip-path="url(#phClip)"><rect x="0" y="0" width="24" height="24" fill="url(#phBg)"/><path d="M-1,21 L11,9 Q12.6,7.5 14.2,9 L25,19.8 V25 H-1 Z" fill="url(#phM2)"/><path d="M2.2,21.8 L12.4,11" stroke="url(#phM1)" stroke-width="6.4" stroke-linecap="round" fill="none"/><rect x="-1" y="22.4" width="9" height="3" fill="#34bdf4"/></g><circle cx="17.9" cy="4.9" r="2.2" fill="#f4f6fc"/></svg>
<span class="t" style="left:175.4px;transform:translateX(-50%);top:65.81px;font-size:7px;color:#1a1a1a;letter-spacing:-0.13px;">2a24e997ca6dc65</span>
<span class="t" style="left:175.4px;transform:translateX(-50%);top:75.11px;font-size:7px;color:#1a1a1a;letter-spacing:-0.13px;">1f17958004f336a1</span>
<span class="t" style="left:175.4px;transform:translateX(-50%);top:84.41px;font-size:7px;color:#1a1a1a;letter-spacing:0.02px;">47e0eb44b.jpg</span>
<svg class="abs" style="left:218.2px;top:4.2px;" width="46" height="61" viewBox="0 0 46 61"><defs><filter id="pngsh" x="-20%" y="-20%" width="140%" height="140%"><feGaussianBlur stdDeviation="0.9"/></filter></defs><path d="M2.4,2.4 H32 L43.6,14 V59 H2.4 Z" fill="#000" opacity="0.16" filter="url(#pngsh)"/><path d="M2,1.4 H31.4 L43.4,13.4 V58.4 H2 Z" fill="#ececec"/><path d="M31.4,1.4 V11 Q31.4,13.4 33.8,13.4 H43.4 Z" fill="#fafafa"/><path d="M31.4,13.4 H43.4 V17 Z" fill="#d4d4d4" opacity="0.6"/><rect x="10.6" y="16.9" width="26.4" height="25.2" rx="4" fill="#5b60e0"/><path d="M14.8,37.2 L17.7,30.6 L20.5,32.2 L25.7,25.9 L32.3,37.2 Z" fill="#4aae54" stroke="#4aae54" stroke-width="0.8" stroke-linejoin="round"/><circle cx="18.1" cy="22.6" r="2.2" fill="#f6e07a"/><circle cx="18.1" cy="22.6" r="1" fill="#fdf8dc"/></svg>
<span class="t" style="left:241.6px;transform:translateX(-50%);top:50.53px;font-size:11px;color:#5a5a5a;letter-spacing:-0.68px;">PNG</span>
<span class="t" style="left:241.4px;transform:translateX(-50%);top:65.81px;font-size:7px;color:#1a1a1a;letter-spacing:-0.13px;">4e4f793fce999a32</span>
<span class="t" style="left:241.4px;transform:translateX(-50%);top:75.11px;font-size:7px;color:#1a1a1a;letter-spacing:-0.04px;">2bfb3a6a2a0a62c</span>
<span class="t" style="left:241.4px;transform:translateX(-50%);top:84.41px;font-size:7px;color:#1a1a1a;letter-spacing:0.1px;">4c.png</span>
<svg class="abs" style="left:287.9px;top:9.1px;" width="38.6" height="51.2" viewBox="0 0 38.5 51"><path d="M0.5,0.5 H27.2 L38.0,11.3 V50.5 H0.5 Z" fill="#fbfbfb" stroke="#9c9c9c" stroke-width="0.9"/><path d="M27.2,0.5 V11.3 H38.0" fill="#f4f0f0" stroke="#9c9c9c" stroke-width="0.8"/></svg>
<svg class="abs" style="left:294.9px;top:23px;" width="24.6" height="24.6" viewBox="0 0 24 24"><g clip-path="url(#phClip)"><rect x="0" y="0" width="24" height="24" fill="url(#phBg)"/><path d="M-1,21 L11,9 Q12.6,7.5 14.2,9 L25,19.8 V25 H-1 Z" fill="url(#phM2)"/><path d="M2.2,21.8 L12.4,11" stroke="url(#phM1)" stroke-width="6.4" stroke-linecap="round" fill="none"/><rect x="-1" y="22.4" width="9" height="3" fill="#34bdf4"/></g><circle cx="17.9" cy="4.9" r="2.2" fill="#f4f6fc"/></svg>
<span class="t" style="left:307.4px;transform:translateX(-50%);top:65.81px;font-size:7px;color:#1a1a1a;letter-spacing:-0.17px;">5ae3432734787b5</span>
<span class="t" style="left:307.4px;transform:translateX(-50%);top:75.11px;font-size:7px;color:#1a1a1a;letter-spacing:0.09px;">9c6f2d6a1b7ef7a</span>
<span class="t" style="left:307.4px;transform:translateX(-50%);top:84.41px;font-size:7px;color:#1a1a1a;letter-spacing:0.32px;">7b0.jpg</span>
<svg class="abs" style="left:353.9px;top:9.1px;" width="38.6" height="51.2" viewBox="0 0 38.5 51"><path d="M0.5,0.5 H27.2 L38.0,11.3 V50.5 H0.5 Z" fill="#fbfbfb" stroke="#9c9c9c" stroke-width="0.9"/><path d="M27.2,0.5 V11.3 H38.0" fill="#f4f0f0" stroke="#9c9c9c" stroke-width="0.8"/></svg>
<svg class="abs" style="left:360.9px;top:23px;" width="24.6" height="24.6" viewBox="0 0 24 24"><g clip-path="url(#phClip)"><rect x="0" y="0" width="24" height="24" fill="url(#phBg)"/><path d="M-1,21 L11,9 Q12.6,7.5 14.2,9 L25,19.8 V25 H-1 Z" fill="url(#phM2)"/><path d="M2.2,21.8 L12.4,11" stroke="url(#phM1)" stroke-width="6.4" stroke-linecap="round" fill="none"/><rect x="-1" y="22.4" width="9" height="3" fill="#34bdf4"/></g><circle cx="17.9" cy="4.9" r="2.2" fill="#f4f6fc"/></svg>
<span class="t" style="left:373.4px;transform:translateX(-50%);top:65.81px;font-size:7px;color:#1a1a1a;letter-spacing:-0.18px;">7f928aec7a68643</span>
<span class="t" style="left:373.4px;transform:translateX(-50%);top:75.11px;font-size:7px;color:#1a1a1a;letter-spacing:-0.13px;">d2a8c5fbb1e6d3</span>
<span class="t" style="left:373.4px;transform:translateX(-50%);top:84.41px;font-size:7px;color:#1a1a1a;letter-spacing:0.29px;">c1a2.jpg</span>
<svg class="abs" style="left:23.7px;top:99.7px;" width="38.6" height="51.2" viewBox="0 0 38.5 51"><path d="M0.5,0.5 H27.2 L38.0,11.3 V50.5 H0.5 Z" fill="#fbfbfb" stroke="#9c9c9c" stroke-width="0.9"/><path d="M27.2,0.5 V11.3 H38.0" fill="#f4f0f0" stroke="#9c9c9c" stroke-width="0.8"/></svg>
<svg class="abs" style="left:30.7px;top:113.6px;" width="24.6" height="24.6" viewBox="0 0 24 24"><g clip-path="url(#phClip)"><rect x="0" y="0" width="24" height="24" fill="url(#phBg)"/><path d="M-1,21 L11,9 Q12.6,7.5 14.2,9 L25,19.8 V25 H-1 Z" fill="url(#phM2)"/><path d="M2.2,21.8 L12.4,11" stroke="url(#phM1)" stroke-width="6.4" stroke-linecap="round" fill="none"/><rect x="-1" y="22.4" width="9" height="3" fill="#34bdf4"/></g><circle cx="17.9" cy="4.9" r="2.2" fill="#f4f6fc"/></svg>
<span class="t" style="left:43.2px;transform:translateX(-50%);top:156.41px;font-size:7px;color:#1a1a1a;letter-spacing:0.13px;">8bf55c6d28bdf2d</span>
<span class="t" style="left:43.2px;transform:translateX(-50%);top:165.71px;font-size:7px;color:#1a1a1a;letter-spacing:-0.04px;">6b61b373d5710b</span>
<span class="t" style="left:43.2px;transform:translateX(-50%);top:175.01px;font-size:7px;color:#1a1a1a;letter-spacing:0.11px;">496c6fc84d5.jpg</span>
<svg class="abs" style="left:89.9px;top:99.7px;" width="38.6" height="51.2" viewBox="0 0 38.5 51"><path d="M0.5,0.5 H27.2 L38.0,11.3 V50.5 H0.5 Z" fill="#fbfbfb" stroke="#9c9c9c" stroke-width="0.9"/><path d="M27.2,0.5 V11.3 H38.0" fill="#f4f0f0" stroke="#9c9c9c" stroke-width="0.8"/></svg>
<svg class="abs" style="left:96.9px;top:113.6px;" width="24.6" height="24.6" viewBox="0 0 24 24"><g clip-path="url(#phClip)"><rect x="0" y="0" width="24" height="24" fill="url(#phBg)"/><path d="M-1,21 L11,9 Q12.6,7.5 14.2,9 L25,19.8 V25 H-1 Z" fill="url(#phM2)"/><path d="M2.2,21.8 L12.4,11" stroke="url(#phM1)" stroke-width="6.4" stroke-linecap="round" fill="none"/><rect x="-1" y="22.4" width="9" height="3" fill="#34bdf4"/></g><circle cx="17.9" cy="4.9" r="2.2" fill="#f4f6fc"/></svg>
<span class="t" style="left:109.4px;transform:translateX(-50%);top:156.41px;font-size:7px;color:#1a1a1a;letter-spacing:-0px;">9d6da4c452fd25a</span>
<span class="t" style="left:109.4px;transform:translateX(-50%);top:165.71px;font-size:7px;color:#1a1a1a;letter-spacing:-0.03px;">a123a69b60dd57f</span>
<span class="t" style="left:109.4px;transform:translateX(-50%);top:175.01px;font-size:7px;color:#1a1a1a;letter-spacing:0.05px;">8ed60d52c4.jpg</span>
<svg class="abs" style="left:155.9px;top:99.7px;" width="38.6" height="51.2" viewBox="0 0 38.5 51"><path d="M0.5,0.5 H27.2 L38.0,11.3 V50.5 H0.5 Z" fill="#fbfbfb" stroke="#9c9c9c" stroke-width="0.9"/><path d="M27.2,0.5 V11.3 H38.0" fill="#f4f0f0" stroke="#9c9c9c" stroke-width="0.8"/></svg>
<svg class="abs" style="left:162.9px;top:113.6px;" width="24.6" height="24.6" viewBox="0 0 24 24"><g clip-path="url(#phClip)"><rect x="0" y="0" width="24" height="24" fill="url(#phBg)"/><path d="M-1,21 L11,9 Q12.6,7.5 14.2,9 L25,19.8 V25 H-1 Z" fill="url(#phM2)"/><path d="M2.2,21.8 L12.4,11" stroke="url(#phM1)" stroke-width="6.4" stroke-linecap="round" fill="none"/><rect x="-1" y="22.4" width="9" height="3" fill="#34bdf4"/></g><circle cx="17.9" cy="4.9" r="2.2" fill="#f4f6fc"/></svg>
<span class="t" style="left:175.4px;transform:translateX(-50%);top:156.41px;font-size:7px;color:#1a1a1a;letter-spacing:-0.01px;">9f5422beb08b1cc</span>
<span class="t" style="left:175.4px;transform:translateX(-50%);top:165.71px;font-size:7px;color:#1a1a1a;letter-spacing:-0.06px;">2056253b8fde822</span>
<span class="t" style="left:175.4px;transform:translateX(-50%);top:175.01px;font-size:7px;color:#1a1a1a;letter-spacing:0.06px;">bb9301b009.jpg</span>
<svg class="abs" style="left:221.9px;top:99.7px;" width="38.6" height="51.2" viewBox="0 0 38.5 51"><path d="M0.5,0.5 H27.2 L38.0,11.3 V50.5 H0.5 Z" fill="#fbfbfb" stroke="#9c9c9c" stroke-width="0.9"/><path d="M27.2,0.5 V11.3 H38.0" fill="#f4f0f0" stroke="#9c9c9c" stroke-width="0.8"/></svg>
<svg class="abs" style="left:228.9px;top:113.6px;" width="24.6" height="24.6" viewBox="0 0 24 24"><g clip-path="url(#phClip)"><rect x="0" y="0" width="24" height="24" fill="url(#phBg)"/><path d="M-1,21 L11,9 Q12.6,7.5 14.2,9 L25,19.8 V25 H-1 Z" fill="url(#phM2)"/><path d="M2.2,21.8 L12.4,11" stroke="url(#phM1)" stroke-width="6.4" stroke-linecap="round" fill="none"/><rect x="-1" y="22.4" width="9" height="3" fill="#34bdf4"/></g><circle cx="17.9" cy="4.9" r="2.2" fill="#f4f6fc"/></svg>
<span class="t" style="left:241.4px;transform:translateX(-50%);top:156.41px;font-size:7px;color:#1a1a1a;letter-spacing:0.24px;">10-Light2.jpg</span>
<svg class="abs" style="left:287.9px;top:99.7px;" width="38.6" height="51.2" viewBox="0 0 38.5 51"><path d="M0.5,0.5 H27.2 L38.0,11.3 V50.5 H0.5 Z" fill="#fbfbfb" stroke="#9c9c9c" stroke-width="0.9"/><path d="M27.2,0.5 V11.3 H38.0" fill="#f4f0f0" stroke="#9c9c9c" stroke-width="0.8"/></svg>
<svg class="abs" style="left:294.9px;top:113.6px;" width="24.6" height="24.6" viewBox="0 0 24 24"><g clip-path="url(#phClip)"><rect x="0" y="0" width="24" height="24" fill="url(#phBg)"/><path d="M-1,21 L11,9 Q12.6,7.5 14.2,9 L25,19.8 V25 H-1 Z" fill="url(#phM2)"/><path d="M2.2,21.8 L12.4,11" stroke="url(#phM1)" stroke-width="6.4" stroke-linecap="round" fill="none"/><rect x="-1" y="22.4" width="9" height="3" fill="#34bdf4"/></g><circle cx="17.9" cy="4.9" r="2.2" fill="#f4f6fc"/></svg>
<span class="t" style="left:307.4px;transform:translateX(-50%);top:156.41px;font-size:7px;color:#1a1a1a;letter-spacing:-0px;">11b7e4a9c2d5f80</span>
<span class="t" style="left:307.4px;transform:translateX(-50%);top:165.71px;font-size:7px;color:#1a1a1a;letter-spacing:-0.04px;">3e6a1c9d7b2f4e5</span>
<span class="t" style="left:307.4px;transform:translateX(-50%);top:175.01px;font-size:7px;color:#1a1a1a;letter-spacing:0.42px;">d8.jpg</span>
<svg class="abs" style="left:353.9px;top:99.7px;" width="38.6" height="51.2" viewBox="0 0 38.5 51"><path d="M0.5,0.5 H27.2 L38.0,11.3 V50.5 H0.5 Z" fill="#fbfbfb" stroke="#9c9c9c" stroke-width="0.9"/><path d="M27.2,0.5 V11.3 H38.0" fill="#f4f0f0" stroke="#9c9c9c" stroke-width="0.8"/></svg>
<svg class="abs" style="left:360.9px;top:113.6px;" width="24.6" height="24.6" viewBox="0 0 24 24"><g clip-path="url(#phClip)"><rect x="0" y="0" width="24" height="24" fill="url(#phBg)"/><path d="M-1,21 L11,9 Q12.6,7.5 14.2,9 L25,19.8 V25 H-1 Z" fill="url(#phM2)"/><path d="M2.2,21.8 L12.4,11" stroke="url(#phM1)" stroke-width="6.4" stroke-linecap="round" fill="none"/><rect x="-1" y="22.4" width="9" height="3" fill="#34bdf4"/></g><circle cx="17.9" cy="4.9" r="2.2" fill="#f4f6fc"/></svg>
<span class="t" style="left:373.4px;transform:translateX(-50%);top:156.41px;font-size:7px;color:#1a1a1a;letter-spacing:0.02px;">11f2c8a6e4b0d7c</span>
<span class="t" style="left:373.4px;transform:translateX(-50%);top:165.71px;font-size:7px;color:#1a1a1a;letter-spacing:-0.04px;">9a3e5b1f6d2c8a4</span>
<span class="t" style="left:373.4px;transform:translateX(-50%);top:175.01px;font-size:7px;color:#1a1a1a;letter-spacing:0.32px;">b7e.jpg</span>
<svg class="abs" style="left:23.7px;top:190.3px;" width="38.6" height="51.2" viewBox="0 0 38.5 51"><path d="M0.5,0.5 H27.2 L38.0,11.3 V50.5 H0.5 Z" fill="#fbfbfb" stroke="#9c9c9c" stroke-width="0.9"/><path d="M27.2,0.5 V11.3 H38.0" fill="#f4f0f0" stroke="#9c9c9c" stroke-width="0.8"/></svg>
<svg class="abs" style="left:30.7px;top:204.2px;" width="24.6" height="24.6" viewBox="0 0 24 24"><g clip-path="url(#phClip)"><rect x="0" y="0" width="24" height="24" fill="url(#phBg)"/><path d="M-1,21 L11,9 Q12.6,7.5 14.2,9 L25,19.8 V25 H-1 Z" fill="url(#phM2)"/><path d="M2.2,21.8 L12.4,11" stroke="url(#phM1)" stroke-width="6.4" stroke-linecap="round" fill="none"/><rect x="-1" y="22.4" width="9" height="3" fill="#34bdf4"/></g><circle cx="17.9" cy="4.9" r="2.2" fill="#f4f6fc"/></svg>
<span class="t" style="left:43.2px;transform:translateX(-50%);top:247.01px;font-size:7px;color:#1a1a1a;letter-spacing:0.2px;">12-Light.jpg</span>
<svg class="abs" style="left:89.9px;top:190.3px;" width="38.6" height="51.2" viewBox="0 0 38.5 51"><path d="M0.5,0.5 H27.2 L38.0,11.3 V50.5 H0.5 Z" fill="#fbfbfb" stroke="#9c9c9c" stroke-width="0.9"/><path d="M27.2,0.5 V11.3 H38.0" fill="#f4f0f0" stroke="#9c9c9c" stroke-width="0.8"/></svg>
<svg class="abs" style="left:96.9px;top:204.2px;" width="24.6" height="24.6" viewBox="0 0 24 24"><g clip-path="url(#phClip)"><rect x="0" y="0" width="24" height="24" fill="url(#phBg)"/><path d="M-1,21 L11,9 Q12.6,7.5 14.2,9 L25,19.8 V25 H-1 Z" fill="url(#phM2)"/><path d="M2.2,21.8 L12.4,11" stroke="url(#phM1)" stroke-width="6.4" stroke-linecap="round" fill="none"/><rect x="-1" y="22.4" width="9" height="3" fill="#34bdf4"/></g><circle cx="17.9" cy="4.9" r="2.2" fill="#f4f6fc"/></svg>
<span class="t" style="left:109.4px;transform:translateX(-50%);top:247.01px;font-size:7px;color:#1a1a1a;letter-spacing:-0.19px;">16ebe7e96661a53</span>
<span class="t" style="left:109.4px;transform:translateX(-50%);top:256.31px;font-size:7px;color:#1a1a1a;letter-spacing:-0.08px;">24071d7e285b9c</span>
<span class="t" style="left:109.4px;transform:translateX(-50%);top:265.61px;font-size:7px;color:#1a1a1a;letter-spacing:0.24px;">3d1e.jpg</span>
<svg class="abs" style="left:155.9px;top:190.3px;" width="38.6" height="51.2" viewBox="0 0 38.5 51"><path d="M0.5,0.5 H27.2 L38.0,11.3 V50.5 H0.5 Z" fill="#fbfbfb" stroke="#9c9c9c" stroke-width="0.9"/><path d="M27.2,0.5 V11.3 H38.0" fill="#f4f0f0" stroke="#9c9c9c" stroke-width="0.8"/></svg>
<svg class="abs" style="left:162.9px;top:204.2px;" width="24.6" height="24.6" viewBox="0 0 24 24"><g clip-path="url(#phClip)"><rect x="0" y="0" width="24" height="24" fill="url(#phBg)"/><path d="M-1,21 L11,9 Q12.6,7.5 14.2,9 L25,19.8 V25 H-1 Z" fill="url(#phM2)"/><path d="M2.2,21.8 L12.4,11" stroke="url(#phM1)" stroke-width="6.4" stroke-linecap="round" fill="none"/><rect x="-1" y="22.4" width="9" height="3" fill="#34bdf4"/></g><circle cx="17.9" cy="4.9" r="2.2" fill="#f4f6fc"/></svg>
<span class="t" style="left:175.4px;transform:translateX(-50%);top:247.01px;font-size:7px;color:#1a1a1a;letter-spacing:0.06px;">65fc95ad69757fe</span>
<span class="t" style="left:175.4px;transform:translateX(-50%);top:256.31px;font-size:7px;color:#1a1a1a;letter-spacing:-0.12px;">2321f8af377ae670</span>
<span class="t" style="left:175.4px;transform:translateX(-50%);top:265.61px;font-size:7px;color:#1a1a1a;letter-spacing:0.48px;">9c.jpg</span>
<svg class="abs" style="left:221.9px;top:190.3px;" width="38.6" height="51.2" viewBox="0 0 38.5 51"><path d="M0.5,0.5 H27.2 L38.0,11.3 V50.5 H0.5 Z" fill="#fbfbfb" stroke="#9c9c9c" stroke-width="0.9"/><path d="M27.2,0.5 V11.3 H38.0" fill="#f4f0f0" stroke="#9c9c9c" stroke-width="0.8"/></svg>
<svg class="abs" style="left:228.9px;top:204.2px;" width="24.6" height="24.6" viewBox="0 0 24 24"><g clip-path="url(#phClip)"><rect x="0" y="0" width="24" height="24" fill="url(#phBg)"/><path d="M-1,21 L11,9 Q12.6,7.5 14.2,9 L25,19.8 V25 H-1 Z" fill="url(#phM2)"/><path d="M2.2,21.8 L12.4,11" stroke="url(#phM1)" stroke-width="6.4" stroke-linecap="round" fill="none"/><rect x="-1" y="22.4" width="9" height="3" fill="#34bdf4"/></g><circle cx="17.9" cy="4.9" r="2.2" fill="#f4f6fc"/></svg>
<span class="t" style="left:241.4px;transform:translateX(-50%);top:247.01px;font-size:7px;color:#1a1a1a;letter-spacing:-0.04px;">73a4e1c8b6d2f09</span>
<span class="t" style="left:241.4px;transform:translateX(-50%);top:256.31px;font-size:7px;color:#1a1a1a;letter-spacing:-0.04px;">ae5c7d1b9f3e2a6</span>
<span class="t" style="left:241.4px;transform:translateX(-50%);top:265.61px;font-size:7px;color:#1a1a1a;letter-spacing:0.42px;">41.jpg</span>
<svg class="abs" style="left:287.9px;top:190.3px;" width="38.6" height="51.2" viewBox="0 0 38.5 51"><path d="M0.5,0.5 H27.2 L38.0,11.3 V50.5 H0.5 Z" fill="#fbfbfb" stroke="#9c9c9c" stroke-width="0.9"/><path d="M27.2,0.5 V11.3 H38.0" fill="#f4f0f0" stroke="#9c9c9c" stroke-width="0.8"/></svg>
<svg class="abs" style="left:294.9px;top:204.2px;" width="24.6" height="24.6" viewBox="0 0 24 24"><g clip-path="url(#phClip)"><rect x="0" y="0" width="24" height="24" fill="url(#phBg)"/><path d="M-1,21 L11,9 Q12.6,7.5 14.2,9 L25,19.8 V25 H-1 Z" fill="url(#phM2)"/><path d="M2.2,21.8 L12.4,11" stroke="url(#phM1)" stroke-width="6.4" stroke-linecap="round" fill="none"/><rect x="-1" y="22.4" width="9" height="3" fill="#34bdf4"/></g><circle cx="17.9" cy="4.9" r="2.2" fill="#f4f6fc"/></svg>
<span class="t" style="left:307.4px;transform:translateX(-50%);top:247.01px;font-size:7px;color:#1a1a1a;letter-spacing:-0.04px;">7c2e9a4b6d1f8e3</span>
<span class="t" style="left:307.4px;transform:translateX(-50%);top:256.31px;font-size:7px;color:#1a1a1a;letter-spacing:-0.04px;">5a7c9e1b3d5f7a9</span>
<span class="t" style="left:307.4px;transform:translateX(-50%);top:265.61px;font-size:7px;color:#1a1a1a;letter-spacing:0.48px;">c2.jpg</span>
<svg class="abs" style="left:353.9px;top:190.3px;" width="38.6" height="51.2" viewBox="0 0 38.5 51"><path d="M0.5,0.5 H27.2 L38.0,11.3 V50.5 H0.5 Z" fill="#fbfbfb" stroke="#9c9c9c" stroke-width="0.9"/><path d="M27.2,0.5 V11.3 H38.0" fill="#f4f0f0" stroke="#9c9c9c" stroke-width="0.8"/></svg>
<svg class="abs" style="left:360.9px;top:204.2px;" width="24.6" height="24.6" viewBox="0 0 24 24"><g clip-path="url(#phClip)"><rect x="0" y="0" width="24" height="24" fill="url(#phBg)"/><path d="M-1,21 L11,9 Q12.6,7.5 14.2,9 L25,19.8 V25 H-1 Z" fill="url(#phM2)"/><path d="M2.2,21.8 L12.4,11" stroke="url(#phM1)" stroke-width="6.4" stroke-linecap="round" fill="none"/><rect x="-1" y="22.4" width="9" height="3" fill="#34bdf4"/></g><circle cx="17.9" cy="4.9" r="2.2" fill="#f4f6fc"/></svg>
<span class="t" style="left:373.4px;transform:translateX(-50%);top:247.01px;font-size:7px;color:#1a1a1a;letter-spacing:-0.04px;">8a1c3e5b7d9f2a4</span>
<span class="t" style="left:373.4px;transform:translateX(-50%);top:256.31px;font-size:7px;color:#1a1a1a;letter-spacing:-0.12px;">6c8e0a2c4e6a8c0</span>
<span class="t" style="left:373.4px;transform:translateX(-50%);top:265.61px;font-size:7px;color:#1a1a1a;letter-spacing:0.42px;">e4.jpg</span>
</div>
</div>
<div id="dlgsh"></div>
<div id="dlg" style="left:578px;top:254px;width:234px;height:291.6px;">
<div class="abs" style="left:0px;top:0px;width:234px;height:18.5px;background:#f5f1f8;"></div>
<span class="t" style="left:4.7px;top:5.44px;font-size:8px;color:#1a1a1a;letter-spacing:-0.29px;">Folder Options</span>
<svg class="abs" style="left:221.8px;top:5px;" width="6.4" height="6.4" viewBox="0 0 6.4 6.4"><path d="M0.3,0.3 L6.1,6.1 M6.1,0.3 L0.3,6.1" stroke="#2a2a2a" stroke-width="0.95" fill="none"/></svg>
<div class="abs" style="left:4.4px;top:36.4px;width:225px;height:232.3px;background:#f9f9fa;border:0.6px solid #e6e6e8;box-sizing:border-box;"></div>
<div class="abs" style="left:35px;top:22.8px;width:26px;height:14.4px;background:#f9f9fa;border-radius:2.5px 2.5px 0 0;"></div>
<span class="t" style="left:7.9px;top:26.42px;font-size:7.4px;color:#1a1a1a;letter-spacing:-0.46px;">General</span>
<span class="t" style="left:39px;top:25.42px;font-size:7.4px;color:#1a1a1a;letter-spacing:-0.62px;">View</span>
<span class="t" style="left:64.6px;top:26.42px;font-size:7.4px;color:#1a1a1a;letter-spacing:-0.52px;">Search</span>
<div class="abs" style="left:15.4px;top:45.4px;width:203.4px;height:49.8px;border:0.6px solid #e4e4e6;border-radius:2px;box-sizing:border-box;"></div>
<div class="abs" style="left:18.8px;top:42px;width:40.2px;height:7px;background:#f9f9fa;"></div>
<span class="t" style="left:20.5px;top:41.92px;font-size:7.2px;color:#1a1a1a;letter-spacing:-0.3px;">Folder views</span>
<span class="t" style="left:58px;top:51.22px;font-size:7.2px;color:#1a1a1a;letter-spacing:-0.27px;">You can apply this view (such as Details or Icons) to</span>
<span class="t" style="left:58px;top:59.12px;font-size:7.2px;color:#1a1a1a;letter-spacing:-0.31px;">all folders of this type.</span>
<svg class="abs" style="left:25.6px;top:55.6px;" width="19" height="18" viewBox="0 0 19 18"><path d="M1,4.4 H6 L7.4,5.8 H10 V8 H0.2 V5.2 Q0.2,4.4 1,4.4 Z" fill="#e8a916"/><rect x="8.6" y="0.4" width="9.6" height="9.6" fill="#dfe8ef" stroke="#8aa0b4" stroke-width="0.7"/><path d="M11.8,0.4 V10 M15,0.4 V10 M8.6,3.6 H18.2 M8.6,6.8 H18.2" stroke="#4a8fc4" stroke-width="0.7"/><path d="M0.2,8.2 Q0.2,7.4 1,7.4 H8 L9.4,8.6 H16.6 Q17.4,8.6 17.4,9.4 V16.8 Q17.4,17.6 16.6,17.6 H1 Q0.2,17.6 0.2,16.8 Z" fill="#f9cf55"/></svg>
<div class="abs" style="left:58.3px;top:72.2px;width:70px;height:13.4px;background:#fdfdfd;border:0.9px solid #4f9db8;border-radius:2.5px;box-sizing:border-box;"></div>
<span class="t" style="left:93.3px;transform:translateX(-50%);top:74.92px;font-size:7.2px;color:#1a1a1a;letter-spacing:-0.38px;">Apply to Folders</span>
<div class="abs" style="left:139.2px;top:72.2px;width:70.2px;height:13.4px;background:#fdfdfd;border:0.6px solid #e2e2e4;border-bottom-color:#d4d4d6;border-radius:2.5px;box-sizing:border-box;"></div>
<span class="t" style="left:174.3px;transform:translateX(-50%);top:74.92px;font-size:7.2px;color:#1a1a1a;letter-spacing:-0.49px;">Reset Folders</span>
<span class="t" style="left:15.2px;top:107.22px;font-size:7.2px;color:#1a1a1a;letter-spacing:-0.3px;">Advanced settings:</span>
<div class="abs" style="left:15.4px;top:116px;width:203.4px;height:120.6px;background:#fff;border:0.8px solid #9a9a9c;box-sizing:border-box;"></div>
<div class="abs" style="left:208px;top:116.8px;width:10px;height:119px;background:#f1f1f2;"></div>
<div class="abs" style="left:212.4px;top:127.5px;width:1.2px;height:31.7px;background:#7e7e80;border-radius:1px;"></div>
<svg class="abs" style="left:18.4px;top:118.7px;" width="7.6" height="6.9" viewBox="0 0 10 9"><path d="M0.6,0.3 H3.4 L4.6,1.5 H9.3 Q9.9,1.5 9.9,2.1 V3 H0.1 V0.8 Q0.1,0.3 0.6,0.3 Z" fill="#eeaa10"/><path d="M0.1,2.6 Q0.1,2.1 0.6,2.1 H3.8 L4.8,1.5 H9.4 Q9.9,1.5 9.9,2.1 V8.1 Q9.9,8.7 9.4,8.7 H0.6 Q0.1,8.7 0.1,8.1 Z" fill="#fcd462"/></svg>
<span class="t" style="left:29.5px;top:119.12px;font-size:7.2px;color:#1a1a1a;letter-spacing:-0.48px;">Files and Folders</span>
<svg class="abs" style="left:30.3px;top:128.57px;" width="7.4" height="7.4" viewBox="0 0 10 10"><rect x="0.3" y="0.3" width="9.4" height="9.4" rx="1.8" fill="#1266b8"/><path d="M2.4,5.2 L4.2,7 L7.7,3.2" fill="none" stroke="#fff" stroke-width="1.2" stroke-linecap="round" stroke-linejoin="round"/></svg>
<div class="abs" style="left:39.8px;top:128px;width:110.4px;height:8.6px;background:#0f78d4;"></div>
<span class="t" style="left:40.9px;top:128.99px;font-size:7.2px;color:#fff;letter-spacing:-0.33px;">Always show icons, never thumbnails</span>
<svg class="abs" style="left:30.3px;top:138.44px;" width="7.4" height="7.4" viewBox="0 0 10 10"><rect x="0.6" y="0.6" width="8.8" height="8.8" rx="1.6" fill="#fafafa" stroke="#6e6e6e" stroke-width="0.9"/></svg>
<span class="t" style="left:40.9px;top:138.86px;font-size:7.2px;color:#1a1a1a;letter-spacing:-0.29px;">Decrease space between items (compact view)</span>
<svg class="abs" style="left:30.3px;top:148.31px;" width="7.4" height="7.4" viewBox="0 0 10 10"><rect x="0.3" y="0.3" width="9.4" height="9.4" rx="1.8" fill="#1266b8"/><path d="M2.4,5.2 L4.2,7 L7.7,3.2" fill="none" stroke="#fff" stroke-width="1.2" stroke-linecap="round" stroke-linejoin="round"/></svg>
<span class="t" style="left:40.9px;top:148.73px;font-size:7.2px;color:#1a1a1a;letter-spacing:-0.32px;">Display file icon on thumbnails</span>
<svg class="abs" style="left:30.3px;top:158.18px;" width="7.4" height="7.4" viewBox="0 0 10 10"><rect x="0.3" y="0.3" width="9.4" height="9.4" rx="1.8" fill="#1266b8"/><path d="M2.4,5.2 L4.2,7 L7.7,3.2" fill="none" stroke="#fff" stroke-width="1.2" stroke-linecap="round" stroke-linejoin="round"/></svg>
<span class="t" style="left:40.9px;top:158.6px;font-size:7.2px;color:#1a1a1a;letter-spacing:-0.33px;">Display file size information in folder tips</span>
<svg class="abs" style="left:30.3px;top:168.05px;" width="7.4" height="7.4" viewBox="0 0 10 10"><rect x="0.6" y="0.6" width="8.8" height="8.8" rx="1.6" fill="#fafafa" stroke="#6e6e6e" stroke-width="0.9"/></svg>
<span class="t" style="left:40.9px;top:168.47px;font-size:7.2px;color:#1a1a1a;letter-spacing:-0.28px;">Display the full path in the title bar</span>
<svg class="abs" style="left:30.3px;top:177.92px;" width="7.6" height="6.9" viewBox="0 0 10 9"><path d="M0.6,0.3 H3.4 L4.6,1.5 H9.3 Q9.9,1.5 9.9,2.1 V3 H0.1 V0.8 Q0.1,0.3 0.6,0.3 Z" fill="#eeaa10"/><path d="M0.1,2.6 Q0.1,2.1 0.6,2.1 H3.8 L4.8,1.5 H9.4 Q9.9,1.5 9.9,2.1 V8.1 Q9.9,8.7 9.4,8.7 H0.6 Q0.1,8.7 0.1,8.1 Z" fill="#fcd462"/></svg>
<span class="t" style="left:40.9px;top:178.34px;font-size:7.2px;color:#1a1a1a;letter-spacing:-0.32px;">Hidden files and folders</span>
<svg class="abs" style="left:42px;top:187.69px;" width="7.6" height="7.6" viewBox="0 0 10 10"><circle cx="5" cy="5" r="4.3" fill="#fafafa" stroke="#6e6e6e" stroke-width="0.9"/></svg>
<span class="t" style="left:52.6px;top:188.21px;font-size:7.2px;color:#1a1a1a;letter-spacing:-0.28px;">Don't show hidden files, folders, or drives</span>
<svg class="abs" style="left:42px;top:197.56px;" width="7.6" height="7.6" viewBox="0 0 10 10"><circle cx="5" cy="5" r="4.7" fill="#1266b8"/><circle cx="5" cy="5" r="2" fill="#fff"/></svg>
<span class="t" style="left:52.6px;top:198.08px;font-size:7.2px;color:#1a1a1a;letter-spacing:-0.29px;">Show hidden files, folders, and drives</span>
<svg class="abs" style="left:30.3px;top:207.53px;" width="7.4" height="7.4" viewBox="0 0 10 10"><rect x="0.3" y="0.3" width="9.4" height="9.4" rx="1.8" fill="#1266b8"/><path d="M2.4,5.2 L4.2,7 L7.7,3.2" fill="none" stroke="#fff" stroke-width="1.2" stroke-linecap="round" stroke-linejoin="round"/></svg>
<span class="t" style="left:40.9px;top:207.95px;font-size:7.2px;color:#1a1a1a;letter-spacing:-0.35px;">Hide empty drives</span>
<svg class="abs" style="left:30.3px;top:217.4px;" width="7.4" height="7.4" viewBox="0 0 10 10"><rect x="0.6" y="0.6" width="8.8" height="8.8" rx="1.6" fill="#fafafa" stroke="#6e6e6e" stroke-width="0.9"/></svg>
<span class="t" style="left:40.9px;top:217.82px;font-size:7.2px;color:#1a1a1a;letter-spacing:-0.3px;">Hide extensions for known file types</span>
<svg class="abs" style="left:30.3px;top:227.27px;" width="7.4" height="7.4" viewBox="0 0 10 10"><rect x="0.3" y="0.3" width="9.4" height="9.4" rx="1.8" fill="#1266b8"/><path d="M2.4,5.2 L4.2,7 L7.7,3.2" fill="none" stroke="#fff" stroke-width="1.2" stroke-linecap="round" stroke-linejoin="round"/></svg>
<span class="t" style="left:40.9px;top:227.69px;font-size:7.2px;color:#1a1a1a;letter-spacing:-0.3px;">Hide folder merge conflicts</span>
<div class="abs" style="left:155px;top:248px;width:62.9px;height:11.8px;background:#fdfdfd;border:0.6px solid #e2e2e4;border-bottom-color:#d4d4d6;border-radius:2.5px;box-sizing:border-box;"></div>
<span class="t" style="left:186.45px;transform:translateX(-50%);top:249.92px;font-size:7.2px;color:#1a1a1a;letter-spacing:-0.46px;">Restore Defaults</span>
<div class="abs" style="left:86px;top:274.3px;width:43.3px;height:12.1px;background:#fdfdfd;border:0.6px solid #e2e2e4;border-bottom-color:#d4d4d6;border-radius:2.5px;box-sizing:border-box;"></div>
<span class="t" style="left:107.65px;transform:translateX(-50%);top:276.37px;font-size:7.2px;color:#1a1a1a;letter-spacing:-0.45px;">OK</span>
<div class="abs" style="left:136px;top:274.3px;width:43.4px;height:12.1px;background:#fdfdfd;border:0.6px solid #e2e2e4;border-bottom-color:#d4d4d6;border-radius:2.5px;box-sizing:border-box;"></div>
<span class="t" style="left:157.7px;transform:translateX(-50%);top:276.37px;font-size:7.2px;color:#1a1a1a;letter-spacing:-0.31px;">Cancel</span>
<div class="abs" style="left:185.6px;top:274.3px;width:43.3px;height:12.1px;background:#fdfdfd;border:0.6px solid #e2e2e4;border-bottom-color:#d4d4d6;border-radius:2.5px;box-sizing:border-box;"></div>
<span class="t" style="left:207.25px;transform:translateX(-50%);top:276.37px;font-size:7.2px;color:#1a1a1a;letter-spacing:-0.08px;">Apply</span>
</div>
<div id="tb" style="top:649.4px;height:29.6px;">
<svg class="abs" style="left:12.2px;top:9px;" width="14.4" height="9.8" viewBox="0 0 14.4 9.8"><defs><linearGradient id="tsG" x1="0" y1="0" x2="1" y2="0"><stop offset="0" stop-color="#176f2a"/><stop offset="0.55" stop-color="#2c9436"/><stop offset="1" stop-color="#86c83a"/></linearGradient></defs><path d="M1.2,7.6 L5.4,3.8 L8,6.6 L11.4,3" fill="none" stroke="url(#tsG)" stroke-width="2.7" stroke-linejoin="miter" stroke-linecap="square"/><path d="M7.4,0.6 H13.8 V7 Z" fill="#7cc436"/></svg>
<span class="t" style="left:31.6px;top:6.61px;font-size:7px;color:#222;letter-spacing:-0.46px;">TSM</span>
<span class="t" style="left:31.6px;top:17.1px;font-size:6.8px;color:#2a7a36;letter-spacing:-0.38px;">+1.12%</span>
<svg class="abs" style="left:191.6px;top:7.8px;" width="14.6" height="14.4" viewBox="0 0 14.6 14.4"><rect x="0" y="0" width="6.9" height="6.8" rx="0.6" fill="#36aef0"/><rect x="7.7" y="0" width="6.9" height="6.8" rx="0.6" fill="#2a9fe8"/><rect x="0" y="7.6" width="6.9" height="6.8" rx="0.6" fill="#1f8fe0"/><rect x="7.7" y="7.6" width="6.9" height="6.8" rx="0.6" fill="#157fd6"/></svg>
<div class="abs" style="left:214.4px;top:5.5px;width:134px;height:18.3px;background:#f5f0fb;border-radius:9.2px;box-shadow:0 0 0 0.5px rgba(150,130,190,.18);"></div>
<svg class="abs" style="left:220.9px;top:10.4px;" width="9" height="9" viewBox="0 0 9 9"><circle cx="3.7" cy="3.7" r="2.9" fill="none" stroke="#222" stroke-width="0.9"/><path d="M5.9,5.9 L8.4,8.4" stroke="#222" stroke-width="1" stroke-linecap="round"/></svg>
<span class="t" style="left:236.8px;top:11.13px;font-size:7.6px;color:#555;letter-spacing:0.07px;">Search</span>
<svg class="abs" style="left:317px;top:7.2px;" width="30" height="15" viewBox="0 0 30 15"><g style="filter:blur(0.35px)"><path d="M1.6,13.4 L5.2,4.6 Q5.6,2.2 7.6,2.4 Q9.2,3.2 8,5.6 L3.8,14 Z" fill="#9c7a54"/><path d="M5.2,4.6 Q5.6,2.2 7.6,2.4 Q9.2,3.2 8,5.6 L6.6,8.2 L4.2,7.2 Z" fill="#d6b88c"/><path d="M13,12.4 Q12,10 15,10.2 Q20,10.8 27.6,9.6 Q29.8,11.6 25,13 Q18,14.4 13,12.4 Z" fill="#6fa852"/><path d="M11.4,9.8 Q9.6,6 12.6,6 Q13.4,3 16,4.4 Q18.8,2.8 19.4,6 Q22,6.2 20.2,10 Q15.8,12.2 11.4,9.8 Z" fill="#e79cc4"/><path d="M13.6,9.6 Q13,6.8 15.8,6 Q18.2,6.8 17.8,9.6 Q15.8,10.6 13.6,9.6 Z" fill="#f3b4d4"/></g></svg>
<svg class="abs" style="left:357px;top:8px;" width="14.2" height="13.6" viewBox="0 0 14.2 13.6"><defs><linearGradient id="tvG" x1="0" y1="1" x2="1" y2="0"><stop offset="0" stop-color="#b9b7bd"/><stop offset="0.6" stop-color="#ecebef"/><stop offset="1" stop-color="#fbfafc"/></linearGradient></defs><rect x="0" y="3.6" width="11" height="9.8" rx="0.8" fill="#1d1b22"/><rect x="3.2" y="0.2" width="10.8" height="9.6" rx="0.8" fill="url(#tvG)"/></svg>
<svg class="abs" style="left:384px;top:7.6px;" width="15" height="14.6" viewBox="0 0 15 14.6"><defs><linearGradient id="cpA" x1="0.3" y1="0" x2="0.4" y2="1"><stop offset="0" stop-color="#1f6fd0"/><stop offset="0.3" stop-color="#2aa6e4"/><stop offset="0.6" stop-color="#58cf6c"/><stop offset="0.82" stop-color="#f2d23e"/><stop offset="1" stop-color="#f08a3a"/></linearGradient><linearGradient id="cpB" x1="0.6" y1="0" x2="0.4" y2="1"><stop offset="0" stop-color="#8a4fe0"/><stop offset="0.4" stop-color="#c552e2"/><stop offset="0.75" stop-color="#f0608e"/><stop offset="1" stop-color="#f2683c"/></linearGradient></defs><path d="M4.4,0.6 H8.6 Q10.2,0.6 10.6,2.2 L11,3.6 H8.8 Q7.4,3.6 7,5 L5.4,10.6 Q5,12 3.6,12 H2.4 Q0.2,11.8 0.6,9.6 L2.4,2.4 Q2.9,0.6 4.4,0.6 Z" fill="url(#cpA)"/><path d="M10.6,14 H6.4 Q4.8,14 4.4,12.4 L4,11 H6.2 Q7.6,11 8,9.6 L9.6,4 Q10,2.6 11.4,2.6 H12.6 Q14.8,2.8 14.4,5 L12.6,12.2 Q12.1,14 10.6,14 Z" fill="url(#cpB)"/></svg>
<svg class="abs" style="left:411px;top:7.4px;" width="15" height="14.6" viewBox="0 0 15 14.6"><g transform="translate(7.5,7.3)"><g fill="#7c8696"><circle r="5.3"/><rect x="-1.9" y="-7.1" width="3.8" height="3.4" rx="0.9"/><rect x="-1.9" y="3.7" width="3.8" height="3.4" rx="0.9"/><g transform="rotate(60)"><rect x="-1.9" y="-7.1" width="3.8" height="3.4" rx="0.9"/><rect x="-1.9" y="3.7" width="3.8" height="3.4" rx="0.9"/></g><g transform="rotate(120)"><rect x="-1.9" y="-7.1" width="3.8" height="3.4" rx="0.9"/><rect x="-1.9" y="3.7" width="3.8" height="3.4" rx="0.9"/></g></g><circle r="3.3" fill="#d3e7fb"/><circle r="2.5" fill="#1f62b4"/></g></svg>
<svg class="abs" style="left:438.1px;top:7.3px;" width="15" height="15" viewBox="0 0 15 15"><circle cx="7.5" cy="7.5" r="7.2" fill="url(#edgeG)"/><path d="M0.5,9.2 Q2.6,15 8.6,14.6 Q11.8,14.2 13.4,11.8 Q10,13.2 7.2,11.6 Q5,10.2 5.2,7.6 Q2.2,7.2 0.5,9.2 Z" fill="#1650a6"/><path d="M8.2,5.4 Q10.6,5.4 10.8,7.6 L15,7.9 L14.8,10.4 Q11,10.2 9.2,9.6 Q6.2,9.4 6.2,7.4 Q6.4,5.4 8.2,5.4 Z" fill="#e6f3f6"/><circle cx="4.4" cy="11.2" r="2.4" fill="#f2c23a"/><rect x="2.6" y="11.2" width="4.4" height="3.2" fill="#e8a41c"/></svg>
<svg class="abs" style="left:465.2px;top:7.3px;" width="15" height="15" viewBox="0 0 15 15"><circle cx="7.5" cy="7.5" r="7.2" fill="url(#edgeG)"/><path d="M0.5,9.2 Q2.6,15 8.6,14.6 Q11.8,14.2 13.4,11.8 Q10,13.2 7.2,11.6 Q5,10.2 5.2,7.6 Q2.2,7.2 0.5,9.2 Z" fill="#1650a6"/><path d="M8.2,5.4 Q10.6,5.4 10.8,7.6 L15,7.9 L14.8,10.4 Q11,10.2 9.2,9.6 Q6.2,9.4 6.2,7.4 Q6.4,5.4 8.2,5.4 Z" fill="#e6f3f6"/><rect x="4.2" y="10.2" width="10.6" height="4.4" rx="0.8" fill="#f5a92a"/><text x="9.5" y="13.7" font-family="Liberation Sans, sans-serif" font-size="3.4" font-weight="700" text-anchor="middle" fill="#222">CAN</text></svg>
<svg class="abs" style="left:492.1px;top:7.3px;" width="15" height="15" viewBox="0 0 15 15"><circle cx="7.5" cy="7.5" r="7.2" fill="url(#edgeG)"/><path d="M0.5,9.2 Q2.6,15 8.6,14.6 Q11.8,14.2 13.4,11.8 Q10,13.2 7.2,11.6 Q5,10.2 5.2,7.6 Q2.2,7.2 0.5,9.2 Z" fill="#1650a6"/><path d="M8.2,5.4 Q10.6,5.4 10.8,7.6 L15,7.9 L14.8,10.4 Q11,10.2 9.2,9.6 Q6.2,9.4 6.2,7.4 Q6.4,5.4 8.2,5.4 Z" fill="#e6f3f6"/><rect x="4.2" y="10.2" width="10.6" height="4.4" rx="0.8" fill="#1c8cc4"/><text x="9.5" y="13.7" font-family="Liberation Sans, sans-serif" font-size="3.4" font-weight="700" text-anchor="middle" fill="#10304a">BETA</text></svg>
<svg class="abs" style="left:519.1px;top:7.3px;" width="15" height="15" viewBox="0 0 15 15"><circle cx="7.5" cy="7.5" r="7.2" fill="url(#edgeG)"/><path d="M0.5,9.2 Q2.6,15 8.6,14.6 Q11.8,14.2 13.4,11.8 Q10,13.2 7.2,11.6 Q5,10.2 5.2,7.6 Q2.2,7.2 0.5,9.2 Z" fill="#1650a6"/><path d="M8.2,5.4 Q10.6,5.4 10.8,7.6 L15,7.9 L14.8,10.4 Q11,10.2 9.2,9.6 Q6.2,9.4 6.2,7.4 Q6.4,5.4 8.2,5.4 Z" fill="#e6f3f6"/><rect x="4.2" y="10.2" width="10.6" height="4.4" rx="0.8" fill="#7cc444"/><text x="9.5" y="13.7" font-family="Liberation Sans, sans-serif" font-size="3.4" font-weight="700" text-anchor="middle" fill="#1c3a10">DEV</text></svg>
<svg class="abs" style="left:546.6px;top:7.3px;" width="15" height="15" viewBox="0 0 15 15"><circle cx="7.5" cy="7.5" r="7.2" fill="#f6c62c"/><path d="M7.5,0.3 A7.2,7.2 0 0 1 13.8,4 H7.5 Z" fill="#f2a81c"/><circle cx="7.5" cy="7.5" r="3.3" fill="#fbe27a"/><circle cx="7.5" cy="7.5" r="2.5" fill="#f2cf2a"/></svg>
<svg class="abs" style="left:573.9px;top:7.3px;" width="15" height="15" viewBox="0 0 15 15"><circle cx="7.5" cy="7.5" r="7.2" fill="#e34133"/><path d="M1.3,3.9 A7.2,7.2 0 0 0 6,14.55 L9.6,9.2 H5 Z" fill="#2f9e4c"/><path d="M14.2,5 A7.2,7.2 0 0 1 6,14.55 L9.8,8 L10.2,5 Z" fill="#f4c020"/><circle cx="7.5" cy="7.5" r="3.4" fill="#fff"/><circle cx="7.5" cy="7.5" r="2.6" fill="#3f7fe8"/></svg>
<svg class="abs" style="left:601.2px;top:7.3px;" width="15" height="15" viewBox="0 0 15 15"><defs><linearGradient id="ffG" x1="0.8" y1="0" x2="0.2" y2="1"><stop offset="0" stop-color="#ffc034"/><stop offset="0.5" stop-color="#ff7a2a"/><stop offset="1" stop-color="#f0365e"/></linearGradient></defs><circle cx="7.5" cy="7.8" r="6.9" fill="url(#ffG)"/><circle cx="7.9" cy="6.6" r="3.5" fill="#7a48d4"/><path d="M3.2,7.4 Q5,9.6 8,9.4 Q11,9 11.8,6.4 Q12.8,10.6 9.4,12.4 Q5.4,13.6 3.4,10.4 Q2.8,8.8 3.2,7.4 Z" fill="#ff8a2c"/><path d="M1.6,4.4 Q3.2,1.8 5.8,2.6 Q4.4,4 4.6,5.8 Q2.6,6 1.6,4.4 Z" fill="#ffd04a"/></svg>
<div class="abs" style="left:624.3px;top:3.2px;width:22.7px;height:22.6px;background:#f3effa;border-radius:3px;box-shadow:0 0 0 0.5px rgba(140,120,180,.2);"></div>
<svg class="abs" style="left:628.2px;top:6.7px;" width="15" height="15" viewBox="0 0 15 15"><path d="M0.8,1.6 H5 L6.2,2.8 H13.6 Q14.4,2.8 14.4,3.6 V5 H0.2 V2.2 Q0.2,1.6 0.8,1.6 Z" fill="#e8a211"/><path d="M0.2,4 H14.8 V12.6 Q14.8,13.4 14,13.4 H1 Q0.2,13.4 0.2,12.6 Z" fill="#f9cf45"/><path d="M3.6,13.4 V10.4 Q3.6,9.2 4.8,9.2 H10.2 Q11.4,9.2 11.4,10.4 V13.4 Z" fill="#1f83d0"/><rect x="3.6" y="11.8" width="7.8" height="1.6" fill="#135fa6"/></svg>
<div class="abs" style="left:631px;top:23.9px;width:9.4px;height:1.9px;background:#1a6fb4;border-radius:1px;"></div>
<svg class="abs" style="left:655.3px;top:7.3px;" width="15" height="15" viewBox="0 0 15 15"><rect x="0.4" y="1.8" width="14.2" height="11.4" rx="1.2" fill="#2b2b30"/><rect x="0.4" y="1.8" width="14.2" height="2.2" rx="1" fill="#4a4a52"/><path d="M3,6.4 L5.6,8.4 L3,10.4" fill="none" stroke="#fff" stroke-width="1.1"/><rect x="7.4" y="9.8" width="6.4" height="2.4" fill="#58c6d8"/></svg>
<svg class="abs" style="left:682.4px;top:7.3px;" width="15" height="15" viewBox="0 0 15 15"><rect x="3" y="1" width="9" height="13" rx="1" fill="#f0b23c"/><path d="M4.4,3.6 H10.6 M4.4,5.8 H10.6 M4.4,8 H10.6 M4.4,10.2 H10.6" stroke="#c98a3a" stroke-width="1"/><path d="M0.8,12.6 L11.4,2 L13.6,3.4 L3.4,13.8 Z" fill="#e99a2a"/></svg>
<svg class="abs" style="left:709.8px;top:7.3px;" width="15" height="15" viewBox="0 0 15 15"><path d="M2.6,0.6 H9.4 L13,4.2 V13.6 Q13,14.4 12.2,14.4 H3.4 Q2.6,14.4 2.6,13.6 Z" fill="#1c78c8"/><path d="M9.4,0.6 V4.2 H13 Z" fill="#7fbcf0"/><circle cx="7.8" cy="9.4" r="2.8" fill="none" stroke="#bfe0fb" stroke-width="0.8"/><path d="M5,9.4 H10.6" stroke="#bfe0fb" stroke-width="0.8"/></svg>
<svg class="abs" style="left:737.2px;top:7.3px;" width="15" height="15" viewBox="0 0 15 15"><path d="M7.5,0.6 L14.4,6.4 V13.4 Q14.4,14.2 13.6,14.2 H1.4 Q0.6,14.2 0.6,13.4 V6.4 Z" fill="#8a4fd0"/><path d="M7.5,0.6 L14.4,6.4 V9 L7.5,3.4 L0.6,9 V6.4 Z" fill="#b07ae8"/><path d="M7.5,5.6 L9.8,11 H5.2 Z" fill="#fff"/><rect x="3.8" y="10.6" width="9.4" height="3.8" rx="0.6" fill="#f0a822"/><text x="8.5" y="13.7" font-family="Liberation Sans, sans-serif" font-size="3.4" font-weight="700" text-anchor="middle" fill="#222">PRE</text></svg>
<svg class="abs" style="left:764.2px;top:7.3px;" width="15" height="15" viewBox="0 0 15 15"><rect x="0.8" y="0.8" width="8" height="8" rx="1.6" fill="#fff" stroke="#d8503c" stroke-width="1.3" stroke-dasharray="2.2 1.2"/><path d="M8.2,4.4 V14 M3.8,9.8 H14.4" stroke="#4a8fd8" stroke-width="1.5" stroke-linecap="round"/></svg>
<svg class="abs" style="left:791.2px;top:7.3px;" width="15" height="15" viewBox="0 0 15 15"><path d="M7.5,0.6 Q8.4,6.6 14.4,7.5 Q8.4,8.4 7.5,14.4 Q6.6,8.4 0.6,7.5 Q6.6,6.6 7.5,0.6 Z" fill="#3f7fdc"/></svg>
<svg class="abs" style="left:818.3px;top:7.3px;" width="15" height="15" viewBox="0 0 15 15"><rect x="1.4" y="1" width="12.2" height="10" rx="0.8" fill="#1b84d2"/><rect x="5.4" y="1" width="4.2" height="6.4" fill="#4fb0ee"/><path d="M0.4,11 H14.6 L12.6,13.6 H2.4 Z" fill="#176fb8"/></svg>
<svg class="abs" style="left:932px;top:11.8px;" width="6.6" height="4.4" viewBox="0 0 6.6 4.4"><path d="M0.5,3.8 L3.3,0.8 L6.1,3.8" fill="none" stroke="#333" stroke-width="1"/></svg>
<svg class="abs" style="left:950.4px;top:9.6px;" width="9.8" height="10.4" viewBox="0 0 9.8 10.4"><rect x="0.5" y="0.8" width="5.6" height="5" rx="0.8" fill="#ddd" stroke="#666" stroke-width="0.7"/><rect x="3.6" y="2.2" width="5.6" height="5" rx="0.8" fill="#eee" stroke="#666" stroke-width="0.7"/><path d="M6.4,7.2 V9.4 M4.4,9.6 H8.4" stroke="#666" stroke-width="0.8"/></svg>
<svg class="abs" style="left:969.4px;top:9.4px;" width="10.6" height="10.6" viewBox="0 0 10.6 10.6"><rect x="0.5" y="1.4" width="8.2" height="6.4" rx="0.8" fill="none" stroke="#333" stroke-width="0.8"/><path d="M2.6,9.8 H6.8 M4.7,7.8 V9.8" stroke="#333" stroke-width="0.8"/><circle cx="8.8" cy="1.8" r="1.5" fill="#e8e2f6" stroke="#333" stroke-width="0.6"/></svg>
<svg class="abs" style="left:984.4px;top:9.8px;" width="10.4" height="9.6" viewBox="0 0 10.4 9.6"><path d="M0.6,3.4 H2.4 L4.6,1.4 V8.2 L2.4,6.2 H0.6 Z" fill="none" stroke="#333" stroke-width="0.7" stroke-linejoin="round"/><path d="M6,3.2 Q7,4.8 6,6.4 M7.4,2 Q9.2,4.8 7.4,7.6 M8.8,0.8 Q11.2,4.8 8.8,8.8" fill="none" stroke="#333" stroke-width="0.6" stroke-linecap="round"/></svg>
<svg class="abs" style="left:1002.6px;top:9.4px;" width="8.8" height="10.6" viewBox="0 0 8.8 10.6"><path d="M4.4,0.6 Q7.2,0.8 7.2,4 V6.2 L8.4,8 H0.4 L1.6,6.2 V4 Q1.6,0.8 4.4,0.6 Z" fill="#333"/><path d="M3.2,8.8 Q4.4,10.4 5.6,8.8 Z" fill="#333"/><path d="M5.4,1 L8,0.6 L7.6,3.4" fill="#e8e2f6" stroke="#333" stroke-width="0.4"/></svg>
</div>
</body>
</html>
